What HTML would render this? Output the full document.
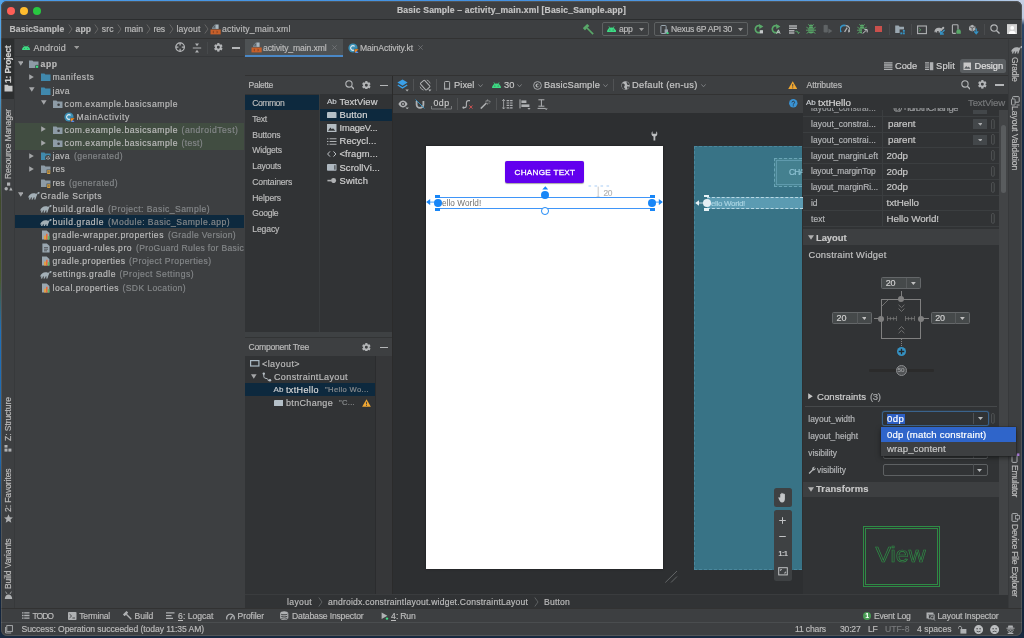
<!DOCTYPE html>
<html><head><meta charset="utf-8"><title>Basic Sample</title><style>
html,body{margin:0;padding:0}
body{width:1024px;height:638px;position:relative;overflow:hidden;background:#1b2f49;font-family:"Liberation Sans",sans-serif;font-size:8.6px;color:#bbbbbb}
.a{position:absolute;box-sizing:border-box}
.t{position:absolute;white-space:nowrap;line-height:12px;height:12px;-webkit-text-stroke:0.18px currentColor}
#w{position:absolute;left:0;top:0;width:1024px;height:638px;will-change:transform}
.b{font-weight:bold}
</style></head><body><div id="w">
<div class="a" style="left:0px;top:0px;width:1024px;height:3px;background:linear-gradient(90deg,#4a9be8 0,#4391e2 500px,#5a9fe4 850px,#8cb8e8 960px,#b4cbe8 1010px,#c9d3e6 1024px);"></div>
<div class="a" style="left:0px;top:0px;width:3px;height:638px;background:linear-gradient(#55a6ea 0,#4a9ad8 90px,#3b6f7a 140px,#3f4a2a 200px,#4a5a30 280px,#1f6fb8 330px,#1f68ac 460px,#16304e 520px,#13233a 638px);"></div>
<div class="a" style="left:1020px;top:0px;width:4px;height:638px;background:linear-gradient(#c4cfe4 0,#bccae0 18px,#2a4668 25px,#162a44 120px,#14243a 638px);"></div>
<div class="a" style="left:0px;top:633px;width:1024px;height:5px;background:#172940;"></div>
<div class="a" style="left:1.2px;top:1.2px;width:1021.0px;height:634.4px;background:#3d3f41;border-radius:6px;overflow:hidden;"></div>
<div class="a" style="left:1.2px;top:1.2px;width:1021.0px;height:17.8px;background:#3d3f41;border-radius:6px 6px 0 0;"></div>
<div class="a" style="left:1.2px;top:19px;width:1021.0px;height:1px;background:#2b2d2e;"></div>
<div class="a" style="left:6.5px;top:6.5px;width:8.0px;height:8.0px;background:#fe5f57;border-radius:50%;"></div>
<div class="a" style="left:19.6px;top:6.5px;width:8.0px;height:8.0px;background:#febc2e;border-radius:50%;"></div>
<div class="a" style="left:32.7px;top:6.5px;width:8.0px;height:8.0px;background:#28c840;border-radius:50%;"></div>
<span class="t b" style="left:397px;top:4.3px;color:#c4c4c4;letter-spacing:0.154px;">Basic Sample – activity_main.xml [Basic_Sample.app]</span>
<div class="a" style="left:1.2px;top:20px;width:1021.0px;height:18px;background:#3d3f41;"></div>
<div class="a" style="left:1.2px;top:38px;width:1021.0px;height:1px;background:#323232;"></div>
<span class="t b" style="left:9.5px;top:23.2px;letter-spacing:0.135px;">BasicSample</span>
<svg class="a" style="left:67.5px;top:24.2px;" width="5" height="10" viewBox="0 0 5 10"><path d="M0.8 0.5 L4 5 L0.8 9.5" fill="none" stroke="#6e6e6e" stroke-width="0.8"/></svg>
<span class="t b" style="left:75.6px;top:23.2px;letter-spacing:0.04px;">app</span>
<svg class="a" style="left:94px;top:24.2px;" width="5" height="10" viewBox="0 0 5 10"><path d="M0.8 0.5 L4 5 L0.8 9.5" fill="none" stroke="#6e6e6e" stroke-width="0.8"/></svg>
<span class="t" style="left:101.7px;top:23.2px;letter-spacing:0.144px;">src</span>
<svg class="a" style="left:116.8px;top:24.2px;" width="5" height="10" viewBox="0 0 5 10"><path d="M0.8 0.5 L4 5 L0.8 9.5" fill="none" stroke="#6e6e6e" stroke-width="0.8"/></svg>
<span class="t" style="left:124.5px;top:23.2px;letter-spacing:-0.035px;">main</span>
<svg class="a" style="left:146px;top:24.2px;" width="5" height="10" viewBox="0 0 5 10"><path d="M0.8 0.5 L4 5 L0.8 9.5" fill="none" stroke="#6e6e6e" stroke-width="0.8"/></svg>
<span class="t" style="left:153.5px;top:23.2px;letter-spacing:-0.151px;">res</span>
<svg class="a" style="left:168.5px;top:24.2px;" width="5" height="10" viewBox="0 0 5 10"><path d="M0.8 0.5 L4 5 L0.8 9.5" fill="none" stroke="#6e6e6e" stroke-width="0.8"/></svg>
<span class="t" style="left:176.5px;top:23.2px;letter-spacing:0.177px;">layout</span>
<svg class="a" style="left:203.5px;top:24.2px;" width="5" height="10" viewBox="0 0 5 10"><path d="M0.8 0.5 L4 5 L0.8 9.5" fill="none" stroke="#6e6e6e" stroke-width="0.8"/></svg>
<svg class="a" style="left:210.3px;top:24px;" width="11" height="11" viewBox="0 0 11 11"><path d="M2 4.9V3.5L4.9 0.6H5.8V4.9Z" fill="#77838c"/><rect x="5.6" y="0.5" width="3" height="4.4" fill="#aab6be"/><path d="M3.2 3.4 4.8 1.8V3.4Z" fill="#4a4e50"/><rect x="0.5" y="5.5" width="10.2" height="4.9" fill="#c8602a"/><path d="M3.9 6.5 2.3 7.95 3.9 9.4ZM6.6 6.5 8.2 7.95 6.6 9.4Z" fill="#8c4424"/></svg>
<span class="t" style="left:222px;top:23.2px;letter-spacing:0.18px;">activity_main.xml</span>
<svg class="a" style="left:583px;top:23.5px;" width="11" height="11" viewBox="0 0 11 11"><g transform="rotate(-45 5.5 5.5)"><rect x="2.4" y="0.6" width="6.2" height="3" rx="0.5" fill="#59a869"/><rect x="4.7" y="3.4" width="1.7" height="8.6" fill="#59a869"/></g></svg>
<div class="a" style="left:601.5px;top:22px;width:47.5px;height:13.5px;background:#3d3f41;border:1px solid #5e6162;border-radius:2px;"></div>
<svg class="a" style="left:607px;top:25.5px;" width="9" height="6" viewBox="0 0 9 6"><path d="M0 6 A4.5 4.6 0 0 1 9 6 Z" fill="#3ddc84"/><path d="M1.8 0.3 2.9 2 M7.2 0.3 6.1 2" stroke="#3ddc84" stroke-width="0.7"/><circle cx="2.9" cy="4" r="0.5" fill="#3d3f41"/><circle cx="6.1" cy="4" r="0.5" fill="#3d3f41"/></svg>
<div class="a" style="left:614.2px;top:30.2px;width:2.2px;height:2.2px;background:#3ddc84;border-radius:50%;"></div>
<span class="t" style="left:619px;top:23.2px;letter-spacing:-0.281px;">app</span>
<svg class="a" style="left:639.0px;top:27.7px;" width="5" height="3.2" viewBox="0 0 5 3.2"><path d="M0 0H5L2.5 3.2Z" fill="#9a9a9a"/></svg>
<div class="a" style="left:653.5px;top:22px;width:94.5px;height:13.5px;background:#3d3f41;border:1px solid #5e6162;border-radius:2px;"></div>
<svg class="a" style="left:660px;top:24.5px;" width="9" height="9.5" viewBox="0 0 9 9.5"><rect x="0.9" y="0.5" width="5.2" height="8" rx="0.8" fill="none" stroke="#9aa7b0" stroke-width="1"/><rect x="4.6" y="4.4" width="3.4" height="4" fill="#9aa7b0"/><circle cx="7.6" cy="8.2" r="1.1" fill="#3ddc84"/></svg>
<span class="t" style="left:671px;top:23.2px;letter-spacing:-0.255px;">Nexus 6P API 30</span>
<svg class="a" style="left:738.0px;top:27.7px;" width="5" height="3.2" viewBox="0 0 5 3.2"><path d="M0 0H5L2.5 3.2Z" fill="#9a9a9a"/></svg>
<svg class="a" style="left:754.3px;top:24.2px;" width="10" height="10.5" viewBox="0 0 10 10.5"><path d="M7.2 2.6 A3.5 3.5 0 1 0 8 6.6" fill="none" stroke="#59a869" stroke-width="1.7"/><path d="M5 0 L9.4 2.6 L5.4 5Z" fill="#59a869"/><rect x="5.8" y="6.2" width="3.2" height="3.2" fill="#c4c6c8"/></svg>
<svg class="a" style="left:771px;top:24.2px;" width="10" height="10.5" viewBox="0 0 10 10.5"><path d="M7.2 2.6 A3.5 3.5 0 1 0 8 6.6" fill="none" stroke="#59a869" stroke-width="1.7"/><path d="M5 0 L9.4 2.6 L5.4 5Z" fill="#59a869"/><path d="M5.6 9.8 L7.4 5.8 L9.2 9.8 M6.4 8.6 H8.4" stroke="#c4c6c8" stroke-width="0.9" fill="none"/></svg>
<svg class="a" style="left:789px;top:25px;" width="10.5" height="9.5" viewBox="0 0 10.5 9.5"><path d="M0 0.9h8M0 3.3h8M0 5.7h5.4M0 8.1h5.4" stroke="#afb1b3" stroke-width="1.5"/><path d="M6.4 6.4c2.2-0.6 3 0.4 3 1.8M8.2 7.4l1.2 1.2 1.1-1.4" fill="none" stroke="#59a869" stroke-width="0.9"/></svg>
<svg class="a" style="left:805.6px;top:24px;" width="10" height="10" viewBox="0 0 10 10"><ellipse cx="5" cy="6" rx="2.9" ry="3.5" fill="#59a869"/><path d="M3 2.6A2 2 0 0 1 7 2.6Z" fill="#59a869"/><path d="M2.4 0.2 3.8 2M7.6 0.2 6.2 2M0.4 3.2 2.6 4.6M9.6 3.2 7.4 4.6M0 6.2h2.2M10 6.2h-2.2M0.6 9.4 2.8 8M9.4 9.4 7.2 8" stroke="#59a869" stroke-width="0.9"/><path d="M2.4 5h5.2M2.4 7.2h5.2" stroke="#3d3f41" stroke-width="0.6"/></svg>
<svg class="a" style="left:822.6px;top:24.4px;" width="10" height="10" viewBox="0 0 10 10"><path d="M0.6 1.2 a4.4 4.4 0 0 1 4.2 0 v6.8 a4.4 4.4 0 0 1-4.2 0z" fill="#5f6365"/><path d="M5.4 4.4 L9.4 7 L5.4 9.6Z" fill="#5f6365"/></svg>
<svg class="a" style="left:839.6px;top:24.4px;" width="10" height="9" viewBox="0 0 10 9"><path d="M1.2 8 A4 4 0 0 1 5.6 1.6" fill="none" stroke="#3592c4" stroke-width="1.7"/><path d="M5.6 1.6 A4 4 0 0 1 9 8" fill="none" stroke="#afb1b3" stroke-width="1.2"/><path d="M4.6 8 L7.2 3.6" stroke="#afb1b3" stroke-width="1.3"/><path d="M8.6 5.4v3" stroke="#afb1b3" stroke-width="0.9"/></svg>
<svg class="a" style="left:857px;top:24px;" width="10" height="10" viewBox="0 0 10 10"><ellipse cx="5" cy="6" rx="2.9" ry="3.5" fill="#59a869"/><path d="M3 2.6A2 2 0 0 1 7 2.6Z" fill="#59a869"/><path d="M2.4 0.2 3.8 2M7.6 0.2 6.2 2M0.4 3.2 2.6 4.6M9.6 3.2 7.4 4.6M0 6.2h2.2M10 6.2h-2.2M0.6 9.4 2.8 8M9.4 9.4 7.2 8" stroke="#59a869" stroke-width="0.9"/><path d="M2.4 5h5.2M2.4 7.2h5.2" stroke="#3d3f41" stroke-width="0.6"/></svg>
<svg class="a" style="left:861.6px;top:29.4px;" width="6" height="5" viewBox="0 0 6 5"><rect width="6" height="5" fill="#3d3f41"/><path d="M0.6 4.6 L4.6 1M2.4 0.6 H5.2 V3.4" stroke="#c4c6c8" stroke-width="1" fill="none"/></svg>
<div class="a" style="left:875.3px;top:25.5px;width:6.8px;height:6.7px;background:#c9504c;"></div>
<div class="a" style="left:889.3px;top:23.5px;width:0.7px;height:11.0px;background:#4a4c4e;"></div>
<svg class="a" style="left:895.4px;top:24.8px;" width="10.5" height="10" viewBox="0 0 10.5 10"><path d="M0.2 0.6h3.4l1 1.2H9v6.2H0.2z" fill="#9aa7b0"/><path d="M4.6 4.4h5.6v5.6H4.6z" fill="#3d3f41"/><rect x="5.4" y="7.4" width="1.9" height="1.9" fill="#3592c4"/><rect x="7.9" y="7.4" width="1.9" height="1.9" fill="#3592c4"/><rect x="7.9" y="4.9" width="1.9" height="1.9" fill="#3592c4"/></svg>
<div class="a" style="left:911.2px;top:23.5px;width:0.7px;height:11.0px;background:#4a4c4e;"></div>
<svg class="a" style="left:916.5px;top:24.5px;" width="10" height="10" viewBox="0 0 10 10"><rect x="0.6" y="1" width="8.8" height="7.6" fill="none" stroke="#afb1b3" stroke-width="1.1"/><path d="M2.2 3.4 3.8 4.8 2.2 6.2" fill="none" stroke="#59a869" stroke-width="0.9"/></svg>
<svg class="a" style="left:933.6px;top:24.6px;" width="11.5" height="10" viewBox="0 0 11.5 10"><path d="M0.4 7.6C0.2 4.2 2.4 2.6 5 2.8 6.4 2.8 7.2 3.6 7.8 3.2 8.2 1.4 10 1.2 10.3 2.4 10.5 3.6 9.4 4.2 9 4.2L8 5.4 6.2 7.6H4.6V6H3.2V7.6H1.6V6.6Z" fill="#afb1b3"/><path d="M10.6 5 7 8.6M6.6 5.8V9H9.8" fill="none" stroke="#3592c4" stroke-width="1.3"/></svg>
<svg class="a" style="left:951px;top:24px;" width="11" height="11" viewBox="0 0 11 11"><rect x="1.4" y="0.8" width="5.6" height="8.6" rx="0.8" fill="none" stroke="#afb1b3" stroke-width="1.1"/><rect x="4.8" y="5.6" width="4.6" height="4.6" fill="#3d3f41"/><path d="M5.4 7.4 A2.2 2.2 0 0 1 9.8 7.4V9.8H5.4Z" fill="#59a869"/></svg>
<svg class="a" style="left:967.5px;top:24px;" width="11" height="11" viewBox="0 0 11 11"><path d="M4.2 0.8 7.4 2.4V6L4.2 7.6 1 6V2.4Z" fill="#afb1b3"/><path d="M1.4 2.6 4.2 4 7 2.6M4.2 4V7.4" stroke="#3d3f41" stroke-width="0.7" fill="none"/><path d="M8.2 4.6V9M6.2 7.4 8.2 9.8 10.2 7.4" stroke="#3592c4" stroke-width="1.3" fill="none"/></svg>
<div class="a" style="left:984.3px;top:23.5px;width:0.7px;height:11.0px;background:#4a4c4e;"></div>
<svg class="a" style="left:990.0400000000001px;top:24.04px;" width="10.120000000000001" height="10.120000000000001" viewBox="0 0 11 11"><circle cx="4.4" cy="4.4" r="3.5" fill="none" stroke="#b4b6b8" stroke-width="1.2"/><path d="M7 7 10.4 10.4" stroke="#b4b6b8" stroke-width="1.5"/></svg>
<svg class="a" style="left:1006.9px;top:23.5px;" width="10.4" height="10.6" viewBox="0 0 11 11"><rect width="11" height="11" fill="#d4d4d4"/><circle cx="5.5" cy="4" r="2" fill="#fff"/><path d="M1.8 11 A3.7 4 0 0 1 9.2 11Z" fill="#fff"/></svg>
<div class="a" style="left:1.2px;top:39px;width:13.3px;height:569.5px;background:#3d3f41;"></div>
<div class="a" style="left:14.2px;top:39px;width:1.0px;height:569.5px;background:#37393b;"></div>
<div class="a" style="left:1.2px;top:39px;width:13.3px;height:59.5px;background:#2d2f30;"></div>
<span class="t b" style="left:8.2px;top:76.5px;color:#d0d0d0;letter-spacing:-0.167px;transform-origin:0 6px;transform:rotate(-90deg);">1: Project</span>
<svg class="a" style="left:3.5px;top:84px;" width="9" height="8" viewBox="0 0 9 8"><path d="M0.5 0.8h3.2l0.9 1H8.5v5.6H0.5z" fill="#c8c8c8"/></svg>
<span class="t" style="left:8.2px;top:172.5px;letter-spacing:-0.193px;transform-origin:0 6px;transform:rotate(-90deg);">Resource Manager</span>
<svg class="a" style="left:3.5px;top:181.5px;" width="9" height="9" viewBox="0 0 9 9"><rect x="3" y="0.5" width="3.2" height="3.2" fill="#afb1b3"/><circle cx="2.2" cy="6.8" r="1.7" fill="#afb1b3"/><path d="M5.2 8.4 6.9 5.2 8.6 8.4Z" fill="#afb1b3"/></svg>
<span class="t" style="left:8.2px;top:435px;letter-spacing:-0.074px;transform-origin:0 6px;transform:rotate(-90deg);">Z: Structure</span>
<svg class="a" style="left:4px;top:444.5px;" width="8" height="8" viewBox="0 0 8 8"><rect x="0.5" y="3.6" width="3" height="3" fill="#afb1b3"/><rect x="4.4" y="3.6" width="3" height="3" fill="#afb1b3"/><rect x="0.5" y="0" width="3" height="2.6" fill="#afb1b3"/></svg>
<span class="t" style="left:8.2px;top:505.5px;letter-spacing:-0.117px;transform-origin:0 6px;transform:rotate(-90deg);">2: Favorites</span>
<svg class="a" style="left:3.5px;top:513.5px;" width="9" height="9" viewBox="0 0 9 9"><path d="M4.5 0.3 5.8 3.2 8.9 3.5 6.5 5.6 7.3 8.7 4.5 7 1.7 8.7 2.5 5.6 0.1 3.5 3.2 3.2Z" fill="#afb1b3"/></svg>
<span class="t" style="left:8.2px;top:582.5px;letter-spacing:-0.135px;transform-origin:0 6px;transform:rotate(-90deg);">Build Variants</span>
<svg class="a" style="left:3.5px;top:591px;" width="9" height="8" viewBox="0 0 9 8"><path d="M0.8 8 A3.7 4.6 0 0 1 8.2 8Z" fill="#afb1b3"/><path d="M1.6 0.6 3 3M7.4 0.6 6 3" stroke="#afb1b3" stroke-width="0.8"/></svg>
<div class="a" style="left:15.3px;top:39px;width:229.2px;height:569.5px;background:#3d3f41;"></div>
<div class="a" style="left:244.5px;top:39px;width:0.8px;height:569.5px;background:#323232;"></div>
<div class="a" style="left:15.3px;top:56.3px;width:229.2px;height:0.7px;background:#353739;"></div>
<svg class="a" style="left:22px;top:44.6px;" width="8" height="5.4" viewBox="0 0 9 6"><path d="M0 6 A4.5 4.6 0 0 1 9 6 Z" fill="#3ddc84"/><path d="M1.8 0.3 2.9 2 M7.2 0.3 6.1 2" stroke="#3ddc84" stroke-width="0.7"/><circle cx="2.9" cy="4" r="0.5" fill="#3d3f41"/><circle cx="6.1" cy="4" r="0.5" fill="#3d3f41"/></svg>
<span class="t" style="left:33.6px;top:41.5px;font-size:9px;letter-spacing:0.196px;">Android</span>
<svg class="a" style="left:73.8px;top:46.4px;" width="5.4" height="3.2" viewBox="0 0 5.4 3.2"><path d="M0 0H5.4L2.7 3.2Z" fill="#9a9a9a"/></svg>
<svg class="a" style="left:175px;top:42.4px;" width="10.2" height="10.2" viewBox="0 0 10.2 10.2"><circle cx="5.1" cy="5.1" r="4.3" fill="none" stroke="#b4b6b8" stroke-width="1.2"/><path d="M5.1 0.8V3.4M5.1 6.8V9.4M0.8 5.1H3.4M6.8 5.1H9.4" stroke="#b4b6b8" stroke-width="1.2"/></svg>
<svg class="a" style="left:191.9px;top:42.6px;" width="10" height="10" viewBox="0 0 10 10"><path d="M0.8 5h8.4" stroke="#afb1b3" stroke-width="1"/><path d="M3 0.6 5 3.2 7 0.6ZM3 9.4 5 6.8 7 9.4Z" fill="#afb1b3"/></svg>
<div class="a" style="left:207.4px;top:42px;width:0.7px;height:12px;background:#46494b;"></div>
<svg class="a" style="left:214.15px;top:43.35px;" width="8.7" height="8.7" viewBox="0 0 10 10"><circle cx="5" cy="5" r="2.75" fill="none" stroke="#b4b6b8" stroke-width="2.1"/><path d="M5.00 8.00L5.00 9.95" stroke="#b4b6b8" stroke-width="2.5"/><path d="M2.40 6.50L0.71 7.48" stroke="#b4b6b8" stroke-width="2.5"/><path d="M2.40 3.50L0.71 2.53" stroke="#b4b6b8" stroke-width="2.5"/><path d="M5.00 2.00L5.00 0.05" stroke="#b4b6b8" stroke-width="2.5"/><path d="M7.60 3.50L9.29 2.52" stroke="#b4b6b8" stroke-width="2.5"/><path d="M7.60 6.50L9.29 7.47" stroke="#b4b6b8" stroke-width="2.5"/></svg>
<div class="a" style="left:232.0px;top:47.300000000000004px;width:8.0px;height:1.3px;background:#b4b6b8;"></div>
<div class="a" style="left:15.3px;top:123.4px;width:229.2px;height:26.33px;background:#414d41;"></div>
<div class="a" style="left:15.3px;top:215.31px;width:229.2px;height:13.2px;background:#0d293e;"></div>
<svg class="a" style="left:17.5px;top:60.849999999999994px;" width="5.6" height="5" viewBox="0 0 5.6 5"><path d="M0 0.2H5.6L2.8 4.8Z" fill="#a4a6a8"/></svg>
<svg class="a" style="left:28.8px;top:60.349999999999994px;" width="10.5" height="9" viewBox="0 0 10.5 9"><path d="M0 0.4h3.4l1 1.2H9.5V8H0z" fill="#8d9ba6"/><circle cx="8" cy="6.8" r="2" fill="#3d3f41"/><circle cx="8" cy="6.8" r="1.3" fill="#3ddc84"/></svg>
<span class="t b" style="left:40.6px;top:58.35px;letter-spacing:0.54px;">app</span>
<svg class="a" style="left:28.6px;top:73.88000000000001px;" width="5" height="6" viewBox="0 0 5 6"><path d="M0.2 0.2 4.8 3 0.2 5.8Z" fill="#a4a6a8"/></svg>
<svg class="a" style="left:41px;top:73.48px;" width="9.5" height="8" viewBox="0 0 9.5 8"><path d="M0 0.4h3.4l1 1.2H9.5V8H0z" fill="#4089ad"/></svg>
<span class="t" style="left:52.6px;top:71.48px;letter-spacing:0.569px;">manifests</span>
<svg class="a" style="left:29.2px;top:87.11px;" width="5.6" height="5" viewBox="0 0 5.6 5"><path d="M0 0.2H5.6L2.8 4.8Z" fill="#a4a6a8"/></svg>
<svg class="a" style="left:41px;top:86.61px;" width="9.5" height="8" viewBox="0 0 9.5 8"><path d="M0 0.4h3.4l1 1.2H9.5V8H0z" fill="#4089ad"/></svg>
<span class="t" style="left:52.6px;top:84.61px;letter-spacing:0.409px;">java</span>
<svg class="a" style="left:41.2px;top:100.24px;" width="5.6" height="5" viewBox="0 0 5.6 5"><path d="M0 0.2H5.6L2.8 4.8Z" fill="#a4a6a8"/></svg>
<svg class="a" style="left:53px;top:99.74px;" width="9.5" height="8" viewBox="0 0 9.5 8"><path d="M0 0.4h3.4l1 1.2H9.5V8H0z" fill="#8d9ba6"/><circle cx="5.6" cy="4.8" r="1.3" fill="#3d3f41"/></svg>
<span class="t" style="left:64.6px;top:97.74px;letter-spacing:0.528px;">com.example.basicsample</span>
<svg class="a" style="left:64px;top:111.87px;" width="11" height="10.5" viewBox="0 0 11 10.5"><circle cx="5" cy="5" r="4.6" fill="#3b8fb5"/><path d="M6.6 3.4A2.3 2.3 0 1 0 6.6 6.6" fill="none" stroke="#dfeaf0" stroke-width="1.2"/><path d="M6.4 5.8h4.4v4.6H6.4z" fill="#3d3f41"/><path d="M6.8 6.2h3.8L6.8 10z" fill="#f88a1c"/><path d="M8.7 8.1 10.6 10H6.8z" fill="#5a8fe8"/></svg>
<span class="t" style="left:76.4px;top:110.87px;letter-spacing:0.646px;">MainActivity</span>
<svg class="a" style="left:40.6px;top:126.4px;" width="5" height="6" viewBox="0 0 5 6"><path d="M0.2 0.2 4.8 3 0.2 5.8Z" fill="#a4a6a8"/></svg>
<svg class="a" style="left:53px;top:126.0px;" width="9.5" height="8" viewBox="0 0 9.5 8"><path d="M0 0.4h3.4l1 1.2H9.5V8H0z" fill="#8d9ba6"/><circle cx="5.6" cy="4.8" r="1.3" fill="#3d3f41"/></svg>
<span class="t" style="left:64.6px;top:124.0px;letter-spacing:0.528px;">com.example.basicsample</span>
<span class="t" style="left:181.5px;top:124.0px;color:#848789;letter-spacing:0.526px;">(androidTest)</span>
<svg class="a" style="left:40.6px;top:139.53px;" width="5" height="6" viewBox="0 0 5 6"><path d="M0.2 0.2 4.8 3 0.2 5.8Z" fill="#a4a6a8"/></svg>
<svg class="a" style="left:53px;top:139.13px;" width="9.5" height="8" viewBox="0 0 9.5 8"><path d="M0 0.4h3.4l1 1.2H9.5V8H0z" fill="#8d9ba6"/><circle cx="5.6" cy="4.8" r="1.3" fill="#3d3f41"/></svg>
<span class="t" style="left:64.6px;top:137.13px;letter-spacing:0.528px;">com.example.basicsample</span>
<span class="t" style="left:181.5px;top:137.13px;color:#848789;letter-spacing:0.32px;">(test)</span>
<svg class="a" style="left:28.6px;top:152.66px;" width="5" height="6" viewBox="0 0 5 6"><path d="M0.2 0.2 4.8 3 0.2 5.8Z" fill="#a4a6a8"/></svg>
<svg class="a" style="left:41px;top:152.26px;" width="9.5" height="8" viewBox="0 0 9.5 8"><path d="M0 0.4h3.4l1 1.2H9.5V8H0z" fill="#4089ad"/></svg>
<svg class="a" style="left:44.5px;top:155.26px;" width="6" height="6" viewBox="0 0 6 6"><circle cx="3" cy="3" r="2.9" fill="#3d3f41"/><circle cx="3" cy="3" r="1.3" fill="none" stroke="#afb1b3" stroke-width="1.3" stroke-dasharray="0.8 0.6"/></svg>
<span class="t" style="left:52.6px;top:150.26px;letter-spacing:0.409px;">java</span>
<span class="t" style="left:74px;top:150.26px;color:#848789;letter-spacing:0.415px;">(generated)</span>
<svg class="a" style="left:28.6px;top:165.79px;" width="5" height="6" viewBox="0 0 5 6"><path d="M0.2 0.2 4.8 3 0.2 5.8Z" fill="#a4a6a8"/></svg>
<svg class="a" style="left:41px;top:165.39px;" width="10" height="9.5" viewBox="0 0 10 9.5"><path d="M0 0.4h3.4l1 1.2H9.5V8H0z" fill="#8d9ba6"/><rect x="5.6" y="4.6" width="4" height="4.6" fill="#3d3f41"/><rect x="6.2" y="5.2" width="3" height="3.8" fill="#d9a343"/><path d="M6.8 6.4h1.8M6.8 7.6h1.8" stroke="#3d3f41" stroke-width="0.5"/></svg>
<span class="t" style="left:52.6px;top:163.39px;letter-spacing:0.149px;">res</span>
<svg class="a" style="left:41px;top:178.52px;" width="10" height="9.5" viewBox="0 0 10 9.5"><path d="M0 0.4h3.4l1 1.2H9.5V8H0z" fill="#8d9ba6"/><rect x="5.6" y="4.6" width="4" height="4.6" fill="#3d3f41"/><rect x="6.2" y="5.2" width="3" height="3.8" fill="#d9a343"/><path d="M6.8 6.4h1.8M6.8 7.6h1.8" stroke="#3d3f41" stroke-width="0.5"/></svg>
<span class="t" style="left:52.6px;top:176.52px;letter-spacing:0.149px;">res</span>
<span class="t" style="left:69px;top:176.52px;color:#848789;letter-spacing:0.415px;">(generated)</span>
<svg class="a" style="left:17.5px;top:192.15px;" width="5.6" height="5" viewBox="0 0 5.6 5"><path d="M0 0.2H5.6L2.8 4.8Z" fill="#a4a6a8"/></svg>
<svg class="a" style="left:28px;top:191.25px;" width="11.5" height="8.6" viewBox="0 0 11.5 8.6"><g transform="translate(1.6 0) skewX(-18)"><path d="M0.6 6.6C0.4 3.6 2.4 2 5 2.2 6.6 2.2 7.4 3 8 2.6 8.2 0.8 10.2 0.4 10.6 1.6 10.9 2.8 9.9 3.3 9.3 3.1 9.6 2.2 9 1.8 8.8 2.6 9 3.8 8.6 4.8 8.6 5.6V8.4H7.2V6.4H6V8.4H4.6V6.4H3.4V8.4H2V6.6Z" fill="#a3afb6"/></g></svg>
<span class="t" style="left:40.6px;top:189.65px;letter-spacing:0.496px;">Gradle Scripts</span>
<svg class="a" style="left:40px;top:204.38px;" width="11.5" height="8.6" viewBox="0 0 11.5 8.6"><g transform="translate(1.6 0) skewX(-18)"><path d="M0.6 6.6C0.4 3.6 2.4 2 5 2.2 6.6 2.2 7.4 3 8 2.6 8.2 0.8 10.2 0.4 10.6 1.6 10.9 2.8 9.9 3.3 9.3 3.1 9.6 2.2 9 1.8 8.8 2.6 9 3.8 8.6 4.8 8.6 5.6V8.4H7.2V6.4H6V8.4H4.6V6.4H3.4V8.4H2V6.6Z" fill="#a3afb6"/></g></svg>
<span class="t" style="left:52.6px;top:202.78px;letter-spacing:0.58px;">build.gradle</span>
<span class="t" style="left:108px;top:202.78px;color:#848789;letter-spacing:0.427px;">(Project: Basic_Sample)</span>
<svg class="a" style="left:40px;top:217.51px;" width="11.5" height="8.6" viewBox="0 0 11.5 8.6"><g transform="translate(1.6 0) skewX(-18)"><path d="M0.6 6.6C0.4 3.6 2.4 2 5 2.2 6.6 2.2 7.4 3 8 2.6 8.2 0.8 10.2 0.4 10.6 1.6 10.9 2.8 9.9 3.3 9.3 3.1 9.6 2.2 9 1.8 8.8 2.6 9 3.8 8.6 4.8 8.6 5.6V8.4H7.2V6.4H6V8.4H4.6V6.4H3.4V8.4H2V6.6Z" fill="#a3afb6"/></g></svg>
<span class="t" style="left:52.6px;top:215.91px;letter-spacing:0.58px;">build.gradle</span>
<span class="t" style="left:108px;top:215.91px;color:#848789;letter-spacing:0.448px;">(Module: Basic_Sample.app)</span>
<svg class="a" style="left:41px;top:230.04px;" width="10" height="10" viewBox="0 0 10 10"><path d="M1 0.5h4.6L8.4 3V9.5H1z" fill="#9aa7b0"/><rect x="3.2" y="5.6" width="1.6" height="4" fill="#f0a030"/><rect x="5" y="3.8" width="1.6" height="5.8" fill="#e86a3a"/><rect x="6.8" y="6.2" width="1.6" height="3.4" fill="#5fb865"/></svg>
<span class="t" style="left:52.6px;top:229.04px;letter-spacing:0.539px;">gradle-wrapper.properties</span>
<span class="t" style="left:168px;top:229.04px;color:#848789;letter-spacing:0.339px;">(Gradle Version)</span>
<svg class="a" style="left:41px;top:243.17px;" width="10" height="10" viewBox="0 0 10 10"><path d="M1.4 0.5h4.4L8.6 3V9.5H1.4z" fill="#9aa7b0"/><path d="M3 4.6h4M3 6.2h4M3 7.8h3" stroke="#3d3f41" stroke-width="0.7"/></svg>
<span class="t" style="left:52.6px;top:242.17px;letter-spacing:0.483px;">proguard-rules.pro</span>
<span class="t" style="left:136px;top:242.17px;color:#848789;letter-spacing:0.308px;">(ProGuard Rules for Basic</span>
<svg class="a" style="left:41px;top:256.3px;" width="10" height="10" viewBox="0 0 10 10"><path d="M1 0.5h4.6L8.4 3V9.5H1z" fill="#9aa7b0"/><rect x="3.2" y="5.6" width="1.6" height="4" fill="#f0a030"/><rect x="5" y="3.8" width="1.6" height="5.8" fill="#e86a3a"/><rect x="6.8" y="6.2" width="1.6" height="3.4" fill="#5fb865"/></svg>
<span class="t" style="left:52.6px;top:255.3px;letter-spacing:0.494px;">gradle.properties</span>
<span class="t" style="left:129px;top:255.3px;color:#848789;letter-spacing:0.423px;">(Project Properties)</span>
<svg class="a" style="left:40px;top:270.03000000000003px;" width="11.5" height="8.6" viewBox="0 0 11.5 8.6"><g transform="translate(1.6 0) skewX(-18)"><path d="M0.6 6.6C0.4 3.6 2.4 2 5 2.2 6.6 2.2 7.4 3 8 2.6 8.2 0.8 10.2 0.4 10.6 1.6 10.9 2.8 9.9 3.3 9.3 3.1 9.6 2.2 9 1.8 8.8 2.6 9 3.8 8.6 4.8 8.6 5.6V8.4H7.2V6.4H6V8.4H4.6V6.4H3.4V8.4H2V6.6Z" fill="#a3afb6"/></g></svg>
<span class="t" style="left:52.6px;top:268.43px;letter-spacing:0.5px;">settings.gradle</span>
<span class="t" style="left:119.5px;top:268.43px;color:#848789;letter-spacing:0.477px;">(Project Settings)</span>
<svg class="a" style="left:41px;top:282.56px;" width="10" height="10" viewBox="0 0 10 10"><path d="M1 0.5h4.6L8.4 3V9.5H1z" fill="#9aa7b0"/><rect x="3.2" y="5.6" width="1.6" height="4" fill="#f0a030"/><rect x="5" y="3.8" width="1.6" height="5.8" fill="#e86a3a"/><rect x="6.8" y="6.2" width="1.6" height="3.4" fill="#5fb865"/></svg>
<span class="t" style="left:52.6px;top:281.56px;letter-spacing:0.507px;">local.properties</span>
<span class="t" style="left:122.5px;top:281.56px;color:#848789;letter-spacing:0.373px;">(SDK Location)</span>
<div class="a" style="left:245.3px;top:39px;width:763.2px;height:17.5px;background:#3d3f41;"></div>
<div class="a" style="left:245.3px;top:39px;width:97.4px;height:17.5px;background:#4e5254;"></div>
<div class="a" style="left:245.3px;top:54.5px;width:97.4px;height:2.0px;background:#4a88c7;"></div>
<div class="a" style="left:245.3px;top:56.7px;width:763.2px;height:0.7px;background:#323232;"></div>
<svg class="a" style="left:250.5px;top:42.4px;" width="11" height="11" viewBox="0 0 11 11"><path d="M2 4.9V3.5L4.9 0.6H5.8V4.9Z" fill="#77838c"/><rect x="5.6" y="0.5" width="3" height="4.4" fill="#aab6be"/><path d="M3.2 3.4 4.8 1.8V3.4Z" fill="#4a4e50"/><rect x="0.5" y="5.5" width="10.2" height="4.9" fill="#c8602a"/><path d="M3.9 6.5 2.3 7.95 3.9 9.4ZM6.6 6.5 8.2 7.95 6.6 9.4Z" fill="#8c4424"/></svg>
<span class="t" style="left:263px;top:41.5px;letter-spacing:-0.114px;">activity_main.xml</span>
<svg class="a" style="left:331.5px;top:45.2px;" width="5" height="5" viewBox="0 0 5 5"><path d="M0.3 0.3 4.7 4.7M4.7 0.3 0.3 4.7" stroke="#7a7d7f" stroke-width="0.7"/></svg>
<svg class="a" style="left:348px;top:42.7px;" width="11" height="10.5" viewBox="0 0 11 10.5"><circle cx="5" cy="5" r="4.6" fill="#3b8fb5"/><path d="M6.6 3.4A2.3 2.3 0 1 0 6.6 6.6" fill="none" stroke="#dfeaf0" stroke-width="1.2"/><path d="M6.4 5.8h4.4v4.6H6.4z" fill="#3d3f41"/><path d="M6.8 6.2h3.8L6.8 10z" fill="#f88a1c"/><path d="M8.7 8.1 10.6 10H6.8z" fill="#5a8fe8"/></svg>
<span class="t" style="left:360px;top:41.5px;letter-spacing:-0.085px;">MainActivity.kt</span>
<svg class="a" style="left:417.5px;top:45.2px;" width="5" height="5" viewBox="0 0 5 5"><path d="M0.3 0.3 4.7 4.7M4.7 0.3 0.3 4.7" stroke="#7a7d7f" stroke-width="0.7"/></svg>
<div class="a" style="left:245.3px;top:57.4px;width:763.2px;height:17.9px;background:#3d3f41;"></div>
<div class="a" style="left:245.3px;top:75.3px;width:763.2px;height:0.7px;background:#323232;"></div>
<div class="a" style="left:960px;top:58.5px;width:45.7px;height:14.3px;background:#5a5e61;border-radius:2.5px;"></div>
<svg class="a" style="left:884px;top:61.5px;" width="8.5" height="9" viewBox="0 0 8.5 9"><path d="M0 0.8h8.5M0 3h8.5M0 5.2h8.5M0 7.4h8.5" stroke="#afb1b3" stroke-width="1.3"/></svg>
<span class="t" style="left:895px;top:60.2px;color:#d0d0d0;font-size:9.3px;letter-spacing:-0.059px;">Code</span>
<svg class="a" style="left:925px;top:61.5px;" width="8.5" height="9" viewBox="0 0 8.5 9"><path d="M0 0.8h4M0 3h4M0 5.2h4M0 7.4h4" stroke="#afb1b3" stroke-width="1.2"/><rect x="4.8" y="0.2" width="3.5" height="8" fill="#afb1b3"/></svg>
<span class="t" style="left:936px;top:60.2px;color:#d0d0d0;font-size:9.3px;letter-spacing:0.181px;">Split</span>
<svg class="a" style="left:963px;top:61.8px;" width="8.5" height="8.5" viewBox="0 0 8.5 8.5"><rect x="0.5" y="0.5" width="7.5" height="7.5" fill="#c8c8c8"/><path d="M1.2 6.8 3.2 4 4.6 5.6 5.8 4.4 7.4 6.8Z" fill="#5a5e61"/></svg>
<span class="t" style="left:974.5px;top:60.2px;color:#e0e0e0;font-size:9.3px;letter-spacing:-0.076px;">Design</span>
<div class="a" style="left:245.3px;top:76px;width:147.0px;height:18.3px;background:#3d3f41;"></div>
<span class="t" style="left:248.6px;top:79px;letter-spacing:-0.338px;">Palette</span>
<svg class="a" style="left:344.55px;top:80.45px;" width="9.9" height="9.9" viewBox="0 0 11 11"><circle cx="4.4" cy="4.4" r="3.5" fill="none" stroke="#b4b6b8" stroke-width="1.2"/><path d="M7 7 10.4 10.4" stroke="#b4b6b8" stroke-width="1.5"/></svg>
<svg class="a" style="left:362.15px;top:80.65px;" width="8.7" height="8.7" viewBox="0 0 10 10"><circle cx="5" cy="5" r="2.75" fill="none" stroke="#b4b6b8" stroke-width="2.1"/><path d="M5.00 8.00L5.00 9.95" stroke="#b4b6b8" stroke-width="2.5"/><path d="M2.40 6.50L0.71 7.48" stroke="#b4b6b8" stroke-width="2.5"/><path d="M2.40 3.50L0.71 2.53" stroke="#b4b6b8" stroke-width="2.5"/><path d="M5.00 2.00L5.00 0.05" stroke="#b4b6b8" stroke-width="2.5"/><path d="M7.60 3.50L9.29 2.52" stroke="#b4b6b8" stroke-width="2.5"/><path d="M7.60 6.50L9.29 7.47" stroke="#b4b6b8" stroke-width="2.5"/></svg>
<div class="a" style="left:379.75px;top:84.6px;width:8.5px;height:1.3px;background:#b4b6b8;"></div>
<div class="a" style="left:245.3px;top:94.3px;width:74.2px;height:237.9px;background:#313335;"></div>
<div class="a" style="left:319.5px;top:94.3px;width:72.8px;height:237.9px;background:#313335;"></div>
<div class="a" style="left:319.2px;top:94.3px;width:0.7px;height:237.9px;background:#393c3e;"></div>
<div class="a" style="left:392.3px;top:76px;width:0.7px;height:518.5px;background:#2b2b2b;"></div>
<div class="a" style="left:245.3px;top:94.5px;width:73.9px;height:15.7px;background:#0d293e;"></div>
<span class="t" style="left:252.3px;top:97.0px;letter-spacing:-0.496px;">Common</span>
<span class="t" style="left:252.3px;top:112.78px;letter-spacing:-0.266px;">Text</span>
<span class="t" style="left:252.3px;top:128.56px;letter-spacing:-0.137px;">Buttons</span>
<span class="t" style="left:252.3px;top:144.34px;letter-spacing:-0.221px;">Widgets</span>
<span class="t" style="left:252.3px;top:160.12px;letter-spacing:-0.201px;">Layouts</span>
<span class="t" style="left:252.3px;top:175.9px;letter-spacing:-0.166px;">Containers</span>
<span class="t" style="left:252.3px;top:191.68px;letter-spacing:-0.132px;">Helpers</span>
<span class="t" style="left:252.3px;top:207.46px;letter-spacing:-0.286px;">Google</span>
<span class="t" style="left:252.3px;top:223.24px;letter-spacing:-0.12px;">Legacy</span>
<div class="a" style="left:320px;top:108.8px;width:72.3px;height:12.7px;background:#0d293e;"></div>
<span class="t" style="left:327px;top:96.0px;color:#c8ccd0;font-size:8px;letter-spacing:-0.148px;">Ab</span>
<span class="t" style="left:339.5px;top:96.0px;color:#d0d0d0;font-size:9.4px;letter-spacing:0.082px;">TextView</span>
<svg class="a" style="left:327px;top:111.89999999999999px;" width="9.5" height="6.4" viewBox="0 0 9.5 6.4"><rect width="9.5" height="6.4" rx="1" fill="#b4c0c8"/></svg>
<span class="t" style="left:339.5px;top:109.1px;color:#d8d8d8;font-size:9.4px;letter-spacing:0.148px;">Button</span>
<svg class="a" style="left:327px;top:124.19999999999999px;" width="9.5" height="8" viewBox="0 0 9.5 8"><rect x="0" y="0" width="9.5" height="8" fill="#b4bcc2"/><path d="M1 6.8 3.4 3.6 4.8 5.2 6 4.2 8.4 6.8Z" fill="#313335"/></svg>
<span class="t" style="left:339.5px;top:122.2px;color:#d0d0d0;font-size:9.4px;letter-spacing:-0.141px;">ImageV...</span>
<svg class="a" style="left:327px;top:137.8px;" width="9.5" height="7" viewBox="0 0 9.5 7"><path d="M0 0.8h1.4M2.6 0.8h6.9M0 3.5h1.4M2.6 3.5h6.9M0 6.2h1.4M2.6 6.2h6.9" stroke="#afb1b3" stroke-width="1.1"/></svg>
<span class="t" style="left:339.5px;top:135.3px;color:#d0d0d0;font-size:9.4px;letter-spacing:0.116px;">Recycl...</span>
<svg class="a" style="left:327px;top:151.4px;" width="9.5" height="6" viewBox="0 0 9.5 6"><path d="M3 0.4 0.6 3 3 5.6M6.5 0.4 8.9 3 6.5 5.6" stroke="#c0c4c8" stroke-width="1" fill="none"/></svg>
<span class="t" style="left:339.5px;top:148.4px;color:#d0d0d0;font-size:9.4px;letter-spacing:0.137px;">&lt;fragm...</span>
<svg class="a" style="left:327px;top:164.1px;" width="9.5" height="6.8" viewBox="0 0 9.5 6.8"><rect x="0" y="0" width="9.5" height="6.8" rx="0.8" fill="#aeb8c0"/><rect x="7.4" y="1.2" width="1" height="4.4" fill="#313335"/></svg>
<span class="t" style="left:339.5px;top:161.5px;color:#d0d0d0;font-size:9.4px;letter-spacing:0.097px;">ScrollVi...</span>
<svg class="a" style="left:327px;top:178.0px;" width="9.5" height="5.2" viewBox="0 0 9.5 5.2"><path d="M0.4 2.6h4" stroke="#afb1b3" stroke-width="1.6"/><circle cx="6.6" cy="2.6" r="2.5" fill="#afb1b3"/></svg>
<span class="t" style="left:339.5px;top:174.6px;color:#d0d0d0;font-size:9.4px;letter-spacing:0.146px;">Switch</span>
<div class="a" style="left:245.3px;top:332.2px;width:147.0px;height:5.1px;background:#3e4143;"></div>
<div class="a" style="left:245.3px;top:336.8px;width:147.0px;height:0.7px;background:#323435;"></div>
<div class="a" style="left:245.3px;top:337.5px;width:147.0px;height:18.8px;background:#3d3f41;"></div>
<span class="t" style="left:248.6px;top:341.2px;letter-spacing:-0.258px;">Component Tree</span>
<svg class="a" style="left:362.15px;top:342.65px;" width="8.7" height="8.7" viewBox="0 0 10 10"><circle cx="5" cy="5" r="2.75" fill="none" stroke="#b4b6b8" stroke-width="2.1"/><path d="M5.00 8.00L5.00 9.95" stroke="#b4b6b8" stroke-width="2.5"/><path d="M2.40 6.50L0.71 7.48" stroke="#b4b6b8" stroke-width="2.5"/><path d="M2.40 3.50L0.71 2.53" stroke="#b4b6b8" stroke-width="2.5"/><path d="M5.00 2.00L5.00 0.05" stroke="#b4b6b8" stroke-width="2.5"/><path d="M7.60 3.50L9.29 2.52" stroke="#b4b6b8" stroke-width="2.5"/><path d="M7.60 6.50L9.29 7.47" stroke="#b4b6b8" stroke-width="2.5"/></svg>
<div class="a" style="left:379.75px;top:346.6px;width:8.5px;height:1.3px;background:#b4b6b8;"></div>
<div class="a" style="left:245.3px;top:356.3px;width:147.0px;height:238.2px;background:#313335;"></div>
<div class="a" style="left:376px;top:356.3px;width:16.3px;height:238.2px;background:#363739;"></div>
<div class="a" style="left:375.2px;top:356.3px;width:0.8px;height:238.2px;background:#2b2c2e;"></div>
<div class="a" style="left:245.3px;top:383.2px;width:129.9px;height:13.1px;background:#0d293e;"></div>
<svg class="a" style="left:250px;top:360.4px;" width="9.5" height="7" viewBox="0 0 9.5 7"><rect x="0.6" y="0.6" width="8.3" height="5.4" fill="none" stroke="#a9b9c4" stroke-width="1.2"/></svg>
<span class="t" style="left:262px;top:357.8px;font-size:9px;letter-spacing:0.434px;">&lt;layout&gt;</span>
<svg class="a" style="left:251.2px;top:373.9px;" width="5.6" height="5" viewBox="0 0 5.6 5"><path d="M0 0.2H5.6L2.8 4.8Z" fill="#a4a6a8"/></svg>
<svg class="a" style="left:261.5px;top:371.8px;" width="10" height="10" viewBox="0 0 10 10"><path d="M1.8 1.6v2.6c0 1.6 0.8 2 2.2 2.2s2.2 0.6 2.2 2.2h1.6" fill="none" stroke="#b8c0c6" stroke-width="1"/><circle cx="1.8" cy="1.6" r="1.2" fill="#b8c0c6"/><circle cx="8" cy="8.3" r="1.2" fill="#b8c0c6"/></svg>
<span class="t" style="left:274px;top:370.8px;font-size:9px;letter-spacing:0.372px;">ConstraintLayout</span>
<span class="t" style="left:273.5px;top:383.8px;color:#c8ccd0;font-size:8px;letter-spacing:0.102px;">Ab</span>
<span class="t" style="left:286px;top:383.8px;color:#d8d8d8;font-size:9px;letter-spacing:0.373px;">txtHello</span>
<span class="t" style="left:325px;top:383.8px;color:#8a8d8f;font-size:7.6px;letter-spacing:0.358px;">&quot;Hello Wo...</span>
<svg class="a" style="left:273.5px;top:399.7px;" width="9.5" height="6.4" viewBox="0 0 9.5 6.4"><rect width="9.5" height="6.4" rx="1" fill="#b4c0c8"/></svg>
<span class="t" style="left:286px;top:396.9px;font-size:9px;letter-spacing:0.328px;">btnChange</span>
<span class="t" style="left:339px;top:396.9px;color:#8a8d8f;font-size:7.6px;letter-spacing:0.297px;">&quot;C...</span>
<svg class="a" style="left:362px;top:398.8px;" width="9.0" height="8.0" viewBox="0 0 9 8"><path d="M4.5 0.2 8.9 7.8H0.1Z" fill="#f0a732"/><path d="M4.5 2.8V5.4M4.5 6.1V7" stroke="#3d3f41" stroke-width="0.9"/></svg>
<div class="a" style="left:393px;top:76px;width:409.5px;height:18.3px;background:#3d3f41;"></div>
<div class="a" style="left:393px;top:94.3px;width:409.5px;height:0.7px;background:#323232;"></div>
<div class="a" style="left:393px;top:95px;width:409.5px;height:17.5px;background:#3d3f41;"></div>
<div class="a" style="left:393px;top:112.5px;width:409.5px;height:0.7px;background:#323232;"></div>
<div class="a" style="left:393px;top:113.2px;width:409.5px;height:481.3px;background:#2d2f31;"></div>
<div class="a" style="left:802.5px;top:76px;width:0.7px;height:518.5px;background:#2b2b2b;"></div>
<svg class="a" style="left:397px;top:79px;" width="12" height="12.5" viewBox="0 0 12 12.5"><path d="M5.5 0.5 10.6 3.6 5.5 6.7 0.4 3.6Z" fill="#3aa0e8"/><path d="M0.8 6 5.5 8.9 10.2 6" fill="none" stroke="#3aa0e8" stroke-width="1.3"/><path d="M8.4 10.4h3.4l-1.7 2z" fill="#afb1b3"/></svg>
<div class="a" style="left:413.3px;top:79px;width:0.7px;height:12px;background:#515355;"></div>
<svg class="a" style="left:419px;top:79px;" width="12.5" height="12.5" viewBox="0 0 12.5 12.5"><rect x="3.4" y="1.6" width="5.6" height="9" rx="1" transform="rotate(-42 6.2 6.1)" fill="none" stroke="#afb1b3" stroke-width="1"/><path d="M1 7.6A5.4 5.4 0 0 0 4.6 11.2M11.2 4.4A5.4 5.4 0 0 0 7.8 1" fill="none" stroke="#afb1b3" stroke-width="0.8"/><path d="M9.2 10.6h3.2l-1.6 1.9z" fill="#afb1b3"/></svg>
<div class="a" style="left:436.3px;top:79px;width:0.7px;height:12px;background:#515355;"></div>
<svg class="a" style="left:444px;top:80.5px;" width="6.5" height="9.5" viewBox="0 0 6.5 9.5"><rect x="0.6" y="0.5" width="5" height="8.4" rx="0.8" fill="none" stroke="#afb1b3" stroke-width="1"/><path d="M0.6 7.4h5" stroke="#afb1b3" stroke-width="0.8"/></svg>
<span class="t" style="left:454px;top:79.2px;color:#c8c8c8;font-size:9.3px;letter-spacing:0.069px;">Pixel</span>
<svg class="a" style="left:477.5px;top:84.1px;" width="5" height="3.4" viewBox="0 0 5 3.4"><path d="M0.4 0.4 2.5 2.8 4.6 0.4" fill="none" stroke="#8a8d8f" stroke-width="0.8"/></svg>
<svg class="a" style="left:492px;top:82.3px;" width="9" height="6" viewBox="0 0 9 6"><path d="M0 6 A4.5 4.6 0 0 1 9 6 Z" fill="#3ddc84"/><path d="M1.8 0.3 2.9 2 M7.2 0.3 6.1 2" stroke="#3ddc84" stroke-width="0.7"/><circle cx="2.9" cy="4" r="0.5" fill="#3d3f41"/><circle cx="6.1" cy="4" r="0.5" fill="#3d3f41"/></svg>
<span class="t" style="left:504px;top:79.2px;color:#c8c8c8;font-size:9.3px;letter-spacing:0.078px;">30</span>
<svg class="a" style="left:517.0px;top:84.1px;" width="5" height="3.4" viewBox="0 0 5 3.4"><path d="M0.4 0.4 2.5 2.8 4.6 0.4" fill="none" stroke="#8a8d8f" stroke-width="0.8"/></svg>
<svg class="a" style="left:532.5px;top:80.7px;" width="9" height="9" viewBox="0 0 9 9"><circle cx="4.5" cy="4.5" r="3.9" fill="none" stroke="#afb1b3" stroke-width="0.9"/><circle cx="4.5" cy="4.5" r="2" fill="#afb1b3"/><circle cx="5.3" cy="4.5" r="1.3" fill="#3d3f41"/></svg>
<span class="t" style="left:544px;top:79.2px;color:#c8c8c8;font-size:9.3px;letter-spacing:0.158px;">BasicSample</span>
<svg class="a" style="left:603.0px;top:84.1px;" width="5" height="3.4" viewBox="0 0 5 3.4"><path d="M0.4 0.4 2.5 2.8 4.6 0.4" fill="none" stroke="#8a8d8f" stroke-width="0.8"/></svg>
<div class="a" style="left:613.3px;top:79px;width:0.7px;height:12px;background:#515355;"></div>
<svg class="a" style="left:620.5px;top:80.7px;" width="9" height="9" viewBox="0 0 9 9"><circle cx="4.5" cy="4.5" r="4.2" fill="#b4b6b8"/><path d="M1.2 2.6c1.4-0.2 2.8 0.4 2.6 1.6S2.6 5.4 3.2 6.6 4.6 7.4 4.2 8.6C2 8.4 0.6 6.4 0.6 4.5 0.6 3.8 0.8 3.2 1.2 2.6ZM5.4 0.7C7 1 8.2 2.4 8.4 4 7.6 3.6 6.6 4.4 6.2 3.6S5.8 1.8 5.4 0.7ZM6.4 5.4c0.8-0.2 1.4 0.2 1.6 0.6-0.2 0.8-0.8 1.6-1.4 2C6.2 7.2 5.8 5.8 6.4 5.4Z" fill="#3d3f41"/></svg>
<span class="t" style="left:632px;top:79.2px;color:#c8c8c8;font-size:9.3px;letter-spacing:0.267px;">Default (en-us)</span>
<svg class="a" style="left:701.0px;top:84.1px;" width="5" height="3.4" viewBox="0 0 5 3.4"><path d="M0.4 0.4 2.5 2.8 4.6 0.4" fill="none" stroke="#8a8d8f" stroke-width="0.8"/></svg>
<svg class="a" style="left:788px;top:81px;" width="9.450000000000001" height="8.4" viewBox="0 0 9 8"><path d="M4.5 0.2 8.9 7.8H0.1Z" fill="#f0a732"/><path d="M4.5 2.8V5.4M4.5 6.1V7" stroke="#3d3f41" stroke-width="0.9"/></svg>
<svg class="a" style="left:398px;top:99.7px;" width="11" height="9.5" viewBox="0 0 11 9.5"><path d="M0.4 4C2 1.4 3.6 0.6 5 0.6S8 1.4 9.6 4C8 6.6 6.4 7.4 5 7.4S2 6.6 0.4 4Z" fill="#afb1b3"/><circle cx="5" cy="4" r="2.1" fill="#3d3f41"/><circle cx="5" cy="4" r="1" fill="#afb1b3"/><path d="M7.6 7.6h3.2L9.2 9.4z" fill="#afb1b3"/></svg>
<svg class="a" style="left:415px;top:99.2px;" width="10" height="10" viewBox="0 0 10 10"><path d="M1.6 2v3.4a3.4 3.4 0 0 0 6.8 0V2" fill="none" stroke="#afb1b3" stroke-width="1.8"/><path d="M0.6 0.6 9.4 9.4" stroke="#3592c4" stroke-width="1"/></svg>
<span class="t" style="left:433.5px;top:97.1px;color:#c8c8c8;font-size:8.8px;letter-spacing:0.438px;">0dp</span>
<svg class="a" style="left:431px;top:106.10000000000001px;" width="21" height="3.6" viewBox="0 0 21 3.6"><path d="M0.5 0v3h20V0" fill="none" stroke="#8a8d8f" stroke-width="0.8"/></svg>
<div class="a" style="left:457px;top:97.5px;width:0.7px;height:12.5px;background:#515355;"></div>
<svg class="a" style="left:462px;top:98.7px;" width="12" height="10.5" viewBox="0 0 12 10.5"><path d="M1 8.6h1.6c1.6 0 1.8-1 1.8-2.4V4c0-1.4 0.4-2.4 2-2.4H8" fill="none" stroke="#afb1b3" stroke-width="1.1"/><circle cx="1.4" cy="8.6" r="1.1" fill="#afb1b3"/><path d="M7.4 6.4 10.4 9.6M10.4 6.4 7.4 9.6" stroke="#e05555" stroke-width="0.9"/></svg>
<svg class="a" style="left:480px;top:98.7px;" width="11" height="10.5" viewBox="0 0 11 10.5"><path d="M0.8 9.6 6.4 4" stroke="#afb1b3" stroke-width="1.5"/><path d="M7.6 0.4v2M7.6 4.2v1.4M5.4 2.8h1.4M8.6 2.8h2M6 1.2l0.8 0.8M9.2 1.2l-0.8 0.8M9.2 4.6l-0.8-0.8" stroke="#afb1b3" stroke-width="0.7"/></svg>
<div class="a" style="left:496.3px;top:97.5px;width:0.7px;height:12.5px;background:#515355;"></div>
<svg class="a" style="left:502px;top:98.7px;" width="11" height="10.5" viewBox="0 0 11 10.5"><path d="M1.6 0.4v9.6M0.2 2 1.6 0.4 3 2M0.2 8.4 1.6 10 3 8.4" fill="none" stroke="#afb1b3" stroke-width="0.8"/><path d="M4.6 1.6h6M4.6 4h6M4.6 6.4h6M4.6 8.8h6" stroke="#afb1b3" stroke-width="1.2"/><path d="M7.6 0.6v9" stroke="#3d3f41" stroke-width="0.8"/></svg>
<svg class="a" style="left:519px;top:98.7px;" width="12" height="11" viewBox="0 0 12 11"><path d="M1 0.4v9" stroke="#afb1b3" stroke-width="1"/><rect x="2.4" y="1.4" width="5" height="2.6" fill="#afb1b3"/><rect x="2.4" y="5.4" width="8" height="2.6" fill="#afb1b3"/><path d="M8.4 9h3.2L10 10.8z" fill="#afb1b3"/></svg>
<svg class="a" style="left:537px;top:98.7px;" width="11" height="11" viewBox="0 0 11 11"><path d="M1.4 0.8h6M4.4 0.8v6.4M1.4 7.2h6" fill="none" stroke="#afb1b3" stroke-width="1"/><path d="M0.6 9.4h8" stroke="#afb1b3" stroke-width="1"/><path d="M7.6 9.4h3.2L9.2 11z" fill="#afb1b3"/></svg>
<svg class="a" style="left:789px;top:99.4px;" width="8.6" height="8.6" viewBox="0 0 8.6 8.6"><circle cx="4.3" cy="4.3" r="4.2" fill="#3a93d4"/><path d="M3 3.4c0-1.6 2.6-1.6 2.6 0 0 1-1.3 1-1.3 2.2M4.3 6.4v0.9" fill="none" stroke="#2d2f31" stroke-width="0.9"/></svg>
<svg class="a" style="left:651.2px;top:131.2px;" width="7" height="10" viewBox="0 0 7 10"><path d="M1.6 0.3A2.9 2.9 0 0 0 2.5 5.4V9.6h1.8V5.4A2.9 2.9 0 0 0 5.2 0.3V2.8H1.6Z" fill="#bcbec0"/></svg>
<div class="a" style="left:425.8px;top:146.2px;width:237.4px;height:422.8px;background:#ffffff;box-shadow:0 0 2px rgba(0,0,0,.5);"></div>
<div class="a" style="left:505px;top:161.4px;width:79.3px;height:21.2px;background:#6200ee;border-radius:2px;box-shadow:0 0.5px 1px rgba(0,0,0,.35);"></div>
<span class="t" style="left:514.5px;top:166.8px;color:#ffffff;font-size:8.1px;letter-spacing:0.307px;-webkit-text-stroke:0.3px #fff;">CHANGE TEXT</span>
<span class="t" style="left:441.9px;top:198.1px;color:#707070;font-size:8.2px;letter-spacing:0.079px;-webkit-text-stroke:0;">ello World!</span>
<div class="a" style="left:437.6px;top:196.95px;width:214.7px;height:0.8px;background:#3f95f8;"></div>
<div class="a" style="left:437.6px;top:208.05px;width:214.7px;height:0.8px;background:#3f95f8;"></div>
<div class="a" style="left:435.40000000000003px;top:195px;width:4.8px;height:2.9px;background:#1886f7;"></div>
<div class="a" style="left:435.40000000000003px;top:208px;width:4.8px;height:2.8px;background:#1886f7;"></div>
<div class="a" style="left:649.8000000000001px;top:195px;width:4.8px;height:2.9px;background:#1886f7;"></div>
<div class="a" style="left:649.8000000000001px;top:208px;width:4.8px;height:2.8px;background:#1886f7;"></div>
<div class="a" style="left:433.8px;top:199.2px;width:7.8px;height:7.8px;background:#1886f7;border-radius:50%;"></div>
<div class="a" style="left:648.3000000000001px;top:199.2px;width:7.8px;height:7.8px;background:#1886f7;border-radius:50%;"></div>
<div class="a" style="left:540.8px;top:190.7px;width:8.0px;height:8.0px;background:#1886f7;border-radius:50%;"></div>
<div class="a" style="left:540.9px;top:207.0px;width:7.8px;height:7.8px;background:#ffffff;border-radius:50%;border:1px solid #1886f7;"></div>
<svg class="a" style="left:425.8px;top:199.3px;" width="9" height="6.2" viewBox="0 0 9 6.2"><path d="M0.1 3.1 4.2 0.1V6.1Z" fill="#1886f7"/><path d="M4 3.1h5" stroke="#1886f7" stroke-width="0.8"/></svg>
<svg class="a" style="left:654.2px;top:199.3px;" width="9" height="6.2" viewBox="0 0 9 6.2"><path d="M8.9 3.1 4.8 0.1V6.1Z" fill="#1886f7"/><path d="M0 3.1h5" stroke="#1886f7" stroke-width="0.8"/></svg>
<svg class="a" style="left:541.6px;top:186px;" width="6.6" height="3.8" viewBox="0 0 6.6 3.8"><path d="M0.3 3.6 3.3 0.3 6.3 3.6Z" fill="#1886f7"/></svg>
<svg class="a" style="left:588px;top:185px;" width="26" height="13" viewBox="0 0 26 13"><path d="M0.5 1h23" stroke="#a9cdf5" stroke-width="1" stroke-dasharray="2.6 3.4"/><path d="M10.2 1.6V12" stroke="#c8c8c8" stroke-width="1"/><path d="M8.6 11.6h3" stroke="#c8c8c8" stroke-width="0.7"/></svg>
<span class="t" style="left:603.4px;top:186.9px;color:#b4b4b4;font-size:8.4px;letter-spacing:-0.364px;">20</span>
<div class="a" style="left:694.1px;top:146.2px;width:108.4px;height:423.6px;background:#387386;border-left:1px dashed #4a879d;border-top:1px dashed #4a879d;border-bottom:1px dashed #4a879d;"></div>
<div class="a" style="left:773.8px;top:158px;width:28.7px;height:28.6px;background:#44808f;border:1px dashed #6aa4b6;border-right:none;"></div>
<div class="a" style="left:775.8px;top:160px;width:26.7px;height:24.6px;border:1px solid #5f9aad;border-right:none;"></div>
<span class="t" style="left:789px;top:166.4px;color:#8ec3d4;font-size:8.3px;letter-spacing:-0.844px;clip-path:inset(0 1.5px 0 0);">CHA</span>
<div class="a" style="left:706.5px;top:196.8px;width:96.0px;height:12.1px;background:#5b9bb2;border-top:1px dashed #b9d8e4;border-bottom:1px dashed #b9d8e4;"></div>
<span class="t" style="left:711px;top:197.6px;color:#a9d4e2;font-size:8px;letter-spacing:-0.332px;">ello World!</span>
<div class="a" style="left:704.1px;top:194.8px;width:4.9px;height:2.6px;background:#e8f2f6;"></div>
<div class="a" style="left:704.1px;top:208.3px;width:4.9px;height:2.6px;background:#e8f2f6;"></div>
<div class="a" style="left:702.5px;top:198.9px;width:8.2px;height:8.2px;background:#e6eef4;border-radius:50%;"></div>
<svg class="a" style="left:695px;top:200px;" width="9" height="6" viewBox="0 0 9 6"><path d="M0.2 3 4 0.2V5.8Z" fill="#e8f2f6"/><path d="M4 3h5" stroke="#e8f2f6" stroke-width="0.8"/></svg>
<svg class="a" style="left:664px;top:570px;" width="15" height="14" viewBox="0 0 15 14"><path d="M1.3 12.5 13 1M7 12.5 13 6.5" stroke="#7a7c7e" stroke-width="0.7"/></svg>
<div class="a" style="left:773.9px;top:487.8px;width:17.8px;height:18.9px;background:#3e4143;border-radius:2.5px;"></div>
<svg class="a" style="left:778px;top:491.5px;" width="10" height="11" viewBox="0 0 10 11"><path d="M2.2 5.6V2.4c0-0.8 1.1-0.8 1.1 0V1.4c0-0.8 1.2-0.8 1.2 0v0.4c0-0.8 1.2-0.8 1.2 0V2.4c0-0.8 1.2-0.8 1.2 0V7c0 2-1 3.4-2.8 3.4S2 9.4 1.4 8.2L0.4 6c-0.3-0.7 0.6-1.2 1-0.6Z" fill="#c4c6c8"/></svg>
<div class="a" style="left:773.9px;top:510.2px;width:17.8px;height:70.4px;background:#3e4143;border-radius:2.5px;"></div>
<svg class="a" style="left:778.2px;top:515.5px;" width="9" height="9" viewBox="0 0 9 9"><path d="M4.5 1.2v6.6M1.2 4.5h6.6" stroke="#c0c2c4" stroke-width="1"/></svg>
<svg class="a" style="left:778.2px;top:532px;" width="9" height="9" viewBox="0 0 9 9"><path d="M1.2 4.5h6.6" stroke="#c0c2c4" stroke-width="1"/></svg>
<span class="t b" style="left:778.6px;top:547.9px;color:#c0c2c4;font-size:6.8px;letter-spacing:-0.343px;">1:1</span>
<svg class="a" style="left:777.8px;top:566.6px;" width="10" height="9" viewBox="0 0 10 9"><rect x="0.7" y="0.7" width="8.6" height="7.2" fill="none" stroke="#c0c2c4" stroke-width="1"/><path d="M2.4 4V2.6H4M7.6 4.6V6H6" fill="none" stroke="#c0c2c4" stroke-width="0.8"/></svg>
<div class="a" style="left:245.3px;top:594.5px;width:763.2px;height:14.0px;background:#313335;"></div>
<div class="a" style="left:245.3px;top:594.3px;width:763.2px;height:0.7px;background:#3a3c3e;"></div>
<span class="t" style="left:287px;top:595.6px;letter-spacing:0.344px;">layout</span>
<svg class="a" style="left:318px;top:596.6px;" width="5" height="10" viewBox="0 0 5 10"><path d="M0.8 0.5 L4 5 L0.8 9.5" fill="none" stroke="#6a6d6f" stroke-width="0.8"/></svg>
<span class="t" style="left:328px;top:595.6px;letter-spacing:0.201px;">androidx.constraintlayout.widget.ConstraintLayout</span>
<svg class="a" style="left:534px;top:596.6px;" width="5" height="10" viewBox="0 0 5 10"><path d="M0.8 0.5 L4 5 L0.8 9.5" fill="none" stroke="#6a6d6f" stroke-width="0.8"/></svg>
<span class="t" style="left:544px;top:595.6px;letter-spacing:0.19px;">Button</span>
<div class="a" style="left:803.2px;top:76px;width:205.3px;height:18.3px;background:#3d3f41;"></div>
<span class="t" style="left:806.5px;top:78.8px;letter-spacing:-0.081px;">Attributes</span>
<svg class="a" style="left:960.55px;top:80.15px;" width="9.9" height="9.9" viewBox="0 0 11 11"><circle cx="4.4" cy="4.4" r="3.5" fill="none" stroke="#b4b6b8" stroke-width="1.2"/><path d="M7 7 10.4 10.4" stroke="#b4b6b8" stroke-width="1.5"/></svg>
<svg class="a" style="left:978.15px;top:80.35000000000001px;" width="8.7" height="8.7" viewBox="0 0 10 10"><circle cx="5" cy="5" r="2.75" fill="none" stroke="#b4b6b8" stroke-width="2.1"/><path d="M5.00 8.00L5.00 9.95" stroke="#b4b6b8" stroke-width="2.5"/><path d="M2.40 6.50L0.71 7.48" stroke="#b4b6b8" stroke-width="2.5"/><path d="M2.40 3.50L0.71 2.53" stroke="#b4b6b8" stroke-width="2.5"/><path d="M5.00 2.00L5.00 0.05" stroke="#b4b6b8" stroke-width="2.5"/><path d="M7.60 3.50L9.29 2.52" stroke="#b4b6b8" stroke-width="2.5"/><path d="M7.60 6.50L9.29 7.47" stroke="#b4b6b8" stroke-width="2.5"/></svg>
<div class="a" style="left:995.25px;top:84.3px;width:8.5px;height:1.3px;background:#b4b6b8;"></div>
<div class="a" style="left:803.2px;top:94.3px;width:205.3px;height:500.2px;background:#313335;"></div>
<div class="a" style="left:999px;top:110px;width:9.5px;height:484.5px;background:#424446;"></div>
<span class="t" style="left:806px;top:96.6px;color:#c8ccd0;font-size:8px;letter-spacing:-0.148px;">Ab</span>
<span class="t" style="left:818px;top:97px;color:#d4d4d4;font-size:9.8px;letter-spacing:0.041px;">txtHello</span>
<span class="t" style="left:968px;top:97px;color:#77797b;font-size:9.6px;letter-spacing:-0.152px;">TextView</span>
<div class="a" style="left:803.2px;top:110px;width:195.8px;height:116.5px;background:#313335;"></div>
<div class="a" style="left:803.2px;top:115.85000000000001px;width:195.8px;height:0.7px;background:#3b3e40;"></div>
<div class="a" style="left:803.2px;top:131.65px;width:195.8px;height:0.7px;background:#3b3e40;"></div>
<div class="a" style="left:803.2px;top:147.4px;width:195.8px;height:0.7px;background:#3b3e40;"></div>
<div class="a" style="left:803.2px;top:163.15px;width:195.8px;height:0.7px;background:#3b3e40;"></div>
<div class="a" style="left:803.2px;top:178.95000000000002px;width:195.8px;height:0.7px;background:#3b3e40;"></div>
<div class="a" style="left:803.2px;top:194.65px;width:195.8px;height:0.7px;background:#3b3e40;"></div>
<div class="a" style="left:803.2px;top:210.45000000000002px;width:195.8px;height:0.7px;background:#3b3e40;"></div>
<div class="a" style="left:803.2px;top:226.15px;width:195.8px;height:0.7px;background:#3b3e40;"></div>
<div class="a" style="left:881.5px;top:110px;width:0.7px;height:116.5px;background:#3b3e40;"></div>
<span class="t" style="left:811px;top:102.3px;color:#9a9c9e;font-size:8.4px;letter-spacing:0.094px;clip-path:inset(5.6px 0 0 0);">layout_constrai...</span>
<span class="t" style="left:893px;top:102.3px;color:#9a9c9e;font-size:9.6px;letter-spacing:-0.53px;clip-path:inset(5.6px 0 0 0);">@+id/btnChange</span>
<div class="a" style="left:973px;top:110px;width:14px;height:3.8px;background:#43474a;"></div>
<span class="t" style="left:811px;top:118.1px;color:#b4b6b8;font-size:8.4px;letter-spacing:0.094px;">layout_constrai...</span>
<span class="t" style="left:888px;top:118.3px;color:#c8c8c8;font-size:9.8px;letter-spacing:-0.047px;">parent</span>
<div class="a" style="left:973px;top:118.89999999999999px;width:14px;height:10.4px;background:#43474a;"></div>
<svg class="a" style="left:977.7px;top:122.89999999999999px;" width="4.6" height="2.8" viewBox="0 0 4.6 2.8"><path d="M0 0H4.6L2.3 2.8Z" fill="#a8aaac"/></svg>
<svg class="a" style="left:991.4px;top:118.69999999999999px;" width="4" height="10.8" viewBox="0 0 4 10.8"><rect x="0.6" y="0.6" width="2.6" height="9.6" rx="1" fill="none" stroke="#5e6163" stroke-width="0.7"/></svg>
<span class="t" style="left:811px;top:133.88px;color:#b4b6b8;font-size:8.4px;letter-spacing:0.094px;">layout_constrai...</span>
<span class="t" style="left:888px;top:134.07px;color:#c8c8c8;font-size:9.8px;letter-spacing:-0.047px;">parent</span>
<div class="a" style="left:973px;top:134.675px;width:14px;height:10.4px;background:#43474a;"></div>
<svg class="a" style="left:977.7px;top:138.67499999999998px;" width="4.6" height="2.8" viewBox="0 0 4.6 2.8"><path d="M0 0H4.6L2.3 2.8Z" fill="#a8aaac"/></svg>
<svg class="a" style="left:991.4px;top:134.475px;" width="4" height="10.8" viewBox="0 0 4 10.8"><rect x="0.6" y="0.6" width="2.6" height="9.6" rx="1" fill="none" stroke="#5e6163" stroke-width="0.7"/></svg>
<span class="t" style="left:811px;top:149.62px;color:#b4b6b8;font-size:8.4px;letter-spacing:0.025px;">layout_marginLeft</span>
<span class="t" style="left:886.5px;top:149.82px;color:#c8c8c8;font-size:9.8px;letter-spacing:-0.074px;">20dp</span>
<svg class="a" style="left:991.4px;top:150.225px;" width="4" height="10.8" viewBox="0 0 4 10.8"><rect x="0.6" y="0.6" width="2.6" height="9.6" rx="1" fill="none" stroke="#5e6163" stroke-width="0.7"/></svg>
<span class="t" style="left:811px;top:165.4px;color:#b4b6b8;font-size:8.4px;letter-spacing:-0.101px;">layout_marginTop</span>
<span class="t" style="left:886.5px;top:165.6px;color:#c8c8c8;font-size:9.8px;letter-spacing:-0.074px;">20dp</span>
<svg class="a" style="left:991.4px;top:166.0px;" width="4" height="10.8" viewBox="0 0 4 10.8"><rect x="0.6" y="0.6" width="2.6" height="9.6" rx="1" fill="none" stroke="#5e6163" stroke-width="0.7"/></svg>
<span class="t" style="left:811px;top:181.15px;color:#b4b6b8;font-size:8.4px;letter-spacing:-0.028px;">layout_marginRi...</span>
<span class="t" style="left:886.5px;top:181.35px;color:#c8c8c8;font-size:9.8px;letter-spacing:-0.074px;">20dp</span>
<svg class="a" style="left:991.4px;top:181.75px;" width="4" height="10.8" viewBox="0 0 4 10.8"><rect x="0.6" y="0.6" width="2.6" height="9.6" rx="1" fill="none" stroke="#5e6163" stroke-width="0.7"/></svg>
<span class="t" style="left:811px;top:196.9px;color:#b4b6b8;font-size:8.4px;letter-spacing:-0.016px;">id</span>
<span class="t" style="left:886.5px;top:197.1px;color:#c8c8c8;font-size:9.8px;letter-spacing:-0.021px;">txtHello</span>
<span class="t" style="left:811px;top:212.65px;color:#b4b6b8;font-size:8.4px;letter-spacing:0.125px;">text</span>
<span class="t" style="left:886.5px;top:212.85px;color:#c8c8c8;font-size:9.8px;letter-spacing:-0.057px;">Hello World!</span>
<svg class="a" style="left:991.4px;top:213.25px;" width="4" height="10.8" viewBox="0 0 4 10.8"><rect x="0.6" y="0.6" width="2.6" height="9.6" rx="1" fill="none" stroke="#5e6163" stroke-width="0.7"/></svg>
<div class="a" style="left:1001px;top:124.5px;width:5px;height:68.0px;background:#595c5e;border-radius:2.5px;"></div>
<div class="a" style="left:803.2px;top:229px;width:195.8px;height:16px;background:#3d3f41;"></div>
<svg class="a" style="left:808px;top:234.5px;" width="6" height="5" viewBox="0 0 6 5"><path d="M0 0.2H6L3 4.8Z" fill="#b0b0b0"/></svg>
<span class="t b" style="left:816px;top:231.5px;color:#c8c8c8;font-size:9.4px;letter-spacing:-0.039px;">Layout</span>
<span class="t" style="left:808.5px;top:249.3px;color:#c0c0c0;font-size:9.3px;letter-spacing:0.242px;">Constraint Widget</span>
<div class="a" style="left:881.2px;top:277px;width:39.6px;height:11.8px;background:#45494a;border:0.8px solid #646769;border-radius:1.5px;"></div>
<div class="a" style="left:905.8px;top:277.8px;width:0.7px;height:10.2px;background:#585b5d;"></div>
<span class="t" style="left:885.8000000000001px;top:277.1px;color:#d0d0d0;font-size:9px;letter-spacing:-0.208px;">20</span>
<svg class="a" style="left:910.8px;top:281.7px;" width="4.8" height="3" viewBox="0 0 4.8 3"><path d="M0 0H4.8L2.4 3Z" fill="#c0c0c0"/></svg>
<div class="a" style="left:832px;top:312.2px;width:39.6px;height:12.1px;background:#45494a;border:0.8px solid #646769;border-radius:1.5px;"></div>
<div class="a" style="left:856.6px;top:313.0px;width:0.7px;height:10.5px;background:#585b5d;"></div>
<span class="t" style="left:836.6px;top:312.45px;color:#d0d0d0;font-size:9px;letter-spacing:-0.208px;">20</span>
<svg class="a" style="left:861.6px;top:317.05px;" width="4.8" height="3" viewBox="0 0 4.8 3"><path d="M0 0H4.8L2.4 3Z" fill="#c0c0c0"/></svg>
<div class="a" style="left:930.6px;top:312.2px;width:39.4px;height:12.1px;background:#45494a;border:0.8px solid #646769;border-radius:1.5px;"></div>
<div class="a" style="left:955px;top:313.0px;width:0.7px;height:10.5px;background:#585b5d;"></div>
<span class="t" style="left:935.2px;top:312.45px;color:#d0d0d0;font-size:9px;letter-spacing:-0.208px;">20</span>
<svg class="a" style="left:960.0px;top:317.05px;" width="4.8" height="3" viewBox="0 0 4.8 3"><path d="M0 0H4.8L2.4 3Z" fill="#c0c0c0"/></svg>
<div class="a" style="left:881px;top:299px;width:40.4px;height:39.6px;border:1px solid #808080;"></div>
<svg class="a" style="left:881px;top:299px;" width="8" height="8" viewBox="0 0 8 8"><path d="M1 7 7 1" stroke="#808080" stroke-width="0.8"/></svg>
<div class="a" style="left:900.6px;top:291px;width:1.0px;height:8px;background:#808080;"></div>
<div class="a" style="left:898.0px;top:296.2px;width:6.2px;height:6.2px;background:#808080;border-radius:50%;"></div>
<div class="a" style="left:873.5px;top:318.3px;width:7.5px;height:1.0px;background:#808080;"></div>
<div class="a" style="left:878.1999999999999px;top:315.7px;width:6.2px;height:6.2px;background:#808080;border-radius:50%;"></div>
<div class="a" style="left:921px;top:318.3px;width:8px;height:1.0px;background:#808080;"></div>
<div class="a" style="left:918.1px;top:315.7px;width:6.2px;height:6.2px;background:#808080;border-radius:50%;"></div>
<svg class="a" style="left:897.6px;top:303.5px;" width="7" height="9" viewBox="0 0 7 9"><path d="M0.6 0.8 3.5 3.6 6.4 0.8M0.6 4.6 3.5 7.4 6.4 4.6" fill="none" stroke="#808080" stroke-width="0.8"/></svg>
<svg class="a" style="left:897.6px;top:324.6px;" width="7" height="9" viewBox="0 0 7 9"><path d="M0.6 4.4 3.5 1.6 6.4 4.4M0.6 8.2 3.5 5.4 6.4 8.2" fill="none" stroke="#808080" stroke-width="0.8"/></svg>
<svg class="a" style="left:887px;top:316.2px;" width="10" height="5.2" viewBox="0 0 10 5.2"><path d="M0.5 0V5.2M9.5 0V5.2M0.5 2.6h9M3.4 0.8V4.4M6.6 0.8V4.4" fill="none" stroke="#808080" stroke-width="0.7"/></svg>
<svg class="a" style="left:905.4px;top:316.2px;" width="10" height="5.2" viewBox="0 0 10 5.2"><path d="M0.5 0V5.2M9.5 0V5.2M0.5 2.6h9M3.4 0.8V4.4M6.6 0.8V4.4" fill="none" stroke="#808080" stroke-width="0.7"/></svg>
<div class="a" style="left:900.7px;top:339px;width:0.8px;height:6.5px;border-left:1px dotted #808080;"></div>
<div class="a" style="left:896.5px;top:347.0px;width:9.2px;height:9.2px;background:#3592c4;border-radius:50%;"></div>
<svg class="a" style="left:897.6px;top:348.1px;" width="7" height="7" viewBox="0 0 7 7"><path d="M3.5 0.7V6.3M0.7 3.5H6.3" stroke="#26282a" stroke-width="1.3"/></svg>
<div class="a" style="left:869px;top:369px;width:64.5px;height:2.6px;background:#2b2b2b;border-radius:1.3px;"></div>
<div class="a" style="left:895.5px;top:364.59999999999997px;width:11.2px;height:11.2px;background:#505254;border-radius:50%;border:0.9px solid #8a8c8e;"></div>
<span class="t" style="left:897.4px;top:364.4px;color:#9a9c9e;font-size:6.2px;letter-spacing:0.255px;">50</span>
<svg class="a" style="left:808.3px;top:393.4px;" width="5" height="6.4" viewBox="0 0 5 6.4"><path d="M0.2 0.2 4.8 3.2 0.2 6.2Z" fill="#c4c4c4"/></svg>
<span class="t" style="left:817px;top:390.5px;color:#cfcfcf;font-size:9.6px;letter-spacing:0.043px;">Constraints</span>
<span class="t" style="left:870px;top:390.5px;color:#a8aaac;font-size:9.6px;letter-spacing:-0.378px;">(3)</span>
<div class="a" style="left:805px;top:406.2px;width:192px;height:0.7px;background:#46494b;"></div>
<span class="t" style="left:808.3px;top:412.7px;color:#b4b6b8;font-size:8.4px;letter-spacing:0.011px;">layout_width</span>
<span class="t" style="left:808.3px;top:429.6px;color:#b4b6b8;font-size:8.4px;letter-spacing:-0.01px;">layout_height</span>
<span class="t" style="left:808.3px;top:446.9px;color:#b4b6b8;font-size:8.4px;letter-spacing:-0.016px;">visibility</span>
<svg class="a" style="left:807.8px;top:465.6px;" width="8" height="8.6" viewBox="0 0 8 8.6"><path d="M0.6 7 4.2 3.4A2.2 2.2 0 0 1 7 0.8L5.6 2.2 6.2 3 7.6 1.8A2.2 2.2 0 0 1 5 4.4L1.6 7.9Z" fill="#b4b6b8"/></svg>
<span class="t" style="left:817px;top:464.1px;color:#b4b6b8;font-size:8.4px;letter-spacing:0.014px;">visibility</span>
<div class="a" style="left:883.4px;top:446px;width:104.4px;height:13.2px;background:#313335;border:0.8px solid #5e6163;border-radius:2px;"></div>
<div class="a" style="left:972.5px;top:446.8px;width:0.7px;height:11.6px;background:#4e5153;"></div>
<svg class="a" style="left:976.6999999999999px;top:451.3px;" width="5" height="3" viewBox="0 0 5 3"><path d="M0 0H5L2.5 3Z" fill="#b8babc"/></svg>
<div class="a" style="left:883.4px;top:463.5px;width:104.4px;height:12.7px;background:#313335;border:0.8px solid #5e6163;border-radius:2px;"></div>
<div class="a" style="left:972.5px;top:464.3px;width:0.7px;height:11.1px;background:#4e5153;"></div>
<svg class="a" style="left:976.6999999999999px;top:468.55px;" width="5" height="3" viewBox="0 0 5 3"><path d="M0 0H5L2.5 3Z" fill="#b8babc"/></svg>
<div class="a" style="left:882px;top:410.6px;width:107.4px;height:15.8px;background:#3a638c;border-radius:3px;box-shadow:0 0 1.5px #3a638c;"></div>
<div class="a" style="left:883.4px;top:412px;width:104.6px;height:13px;background:#303335;border-radius:1.5px;"></div>
<div class="a" style="left:973px;top:412.6px;width:0.7px;height:11.8px;background:#4e5153;"></div>
<svg class="a" style="left:977.9px;top:417.3px;" width="5" height="3" viewBox="0 0 5 3"><path d="M0 0H5L2.5 3Z" fill="#b8babc"/></svg>
<div class="a" style="left:887px;top:413.6px;width:17.8px;height:10.0px;background:#2d5fc4;"></div>
<span class="t" style="left:887px;top:412.8px;color:#ffffff;font-size:9.6px;letter-spacing:0.395px;">0dp</span>
<svg class="a" style="left:991.4px;top:413.40000000000003px;" width="4" height="10.8" viewBox="0 0 4 10.8"><rect x="0.6" y="0.6" width="2.6" height="9.6" rx="1" fill="none" stroke="#5e6163" stroke-width="0.7"/></svg>
<div class="a" style="left:803.2px;top:482.4px;width:195.8px;height:14.2px;background:#3d3f41;"></div>
<svg class="a" style="left:808px;top:486.8px;" width="6" height="5" viewBox="0 0 6 5"><path d="M0 0.2H6L3 4.8Z" fill="#b0b0b0"/></svg>
<span class="t b" style="left:816px;top:483.4px;color:#c8c8c8;font-size:9.4px;letter-spacing:0.144px;">Transforms</span>
<div class="a" style="left:862.8px;top:526.2px;width:77.2px;height:60.8px;border:1px solid #2e8b45;"></div>
<div class="a" style="left:864.8px;top:528.2px;width:73.2px;height:56.8px;border:1px solid #2e8b45;"></div>
<svg class="a" style="left:870px;top:538px" width="62" height="32" viewBox="0 0 62 32"><text x="5.4" y="24" font-family="Liberation Sans, sans-serif" font-size="22.6" fill="none" stroke="#2e8b45" stroke-width="0.7" textLength="50.2" lengthAdjust="spacingAndGlyphs">View</text></svg>
<div class="a" style="left:1008.5px;top:39px;width:13.7px;height:569.5px;background:#3d3f41;"></div>
<div class="a" style="left:1008.3px;top:39px;width:0.8px;height:569.5px;background:#37393b;"></div>
<svg class="a" style="left:1010.5px;top:45.1px;" width="11.5" height="8.6" viewBox="0 0 11.5 8.6"><g transform="translate(1.6 0) skewX(-18)"><path d="M0.6 6.6C0.4 3.6 2.4 2 5 2.2 6.6 2.2 7.4 3 8 2.6 8.2 0.8 10.2 0.4 10.6 1.6 10.9 2.8 9.9 3.3 9.3 3.1 9.6 2.2 9 1.8 8.8 2.6 9 3.8 8.6 4.8 8.6 5.6V8.4H7.2V6.4H6V8.4H4.6V6.4H3.4V8.4H2V6.6Z" fill="#afb1b3"/></g></svg>
<span class="t" style="left:1015.2px;top:50.6px;letter-spacing:-0.199px;transform-origin:0 6px;transform:rotate(90deg);">Gradle</span>
<svg class="a" style="left:1011px;top:95.5px;" width="9" height="10" viewBox="0 0 9 10"><rect x="1.6" y="0.6" width="6.6" height="5.6" rx="0.8" fill="none" stroke="#afb1b3" stroke-width="1"/><rect x="0.5" y="3" width="3.6" height="6" rx="0.6" fill="#3d3f41" stroke="#afb1b3" stroke-width="0.9"/><path d="M5.6 9h3" stroke="#afb1b3" stroke-width="0.9"/></svg>
<span class="t" style="left:1015.2px;top:100px;letter-spacing:-0.065px;transform-origin:0 6px;transform:rotate(90deg);">Layout Validation</span>
<svg class="a" style="left:1011px;top:452.5px;" width="9" height="10" viewBox="0 0 9 10"><rect x="1" y="2" width="5" height="7.4" rx="0.8" fill="none" stroke="#afb1b3" stroke-width="1"/><rect x="5.8" y="0.4" width="2.6" height="2.6" fill="#b080e0"/></svg>
<span class="t" style="left:1015.2px;top:458.6px;letter-spacing:-0.299px;transform-origin:0 6px;transform:rotate(90deg);">Emulator</span>
<svg class="a" style="left:1011px;top:512.6px;" width="9" height="9" viewBox="0 0 9 9"><rect x="1" y="0.6" width="5.6" height="7.8" rx="0.8" fill="none" stroke="#afb1b3" stroke-width="1"/><rect x="4.4" y="2.6" width="4" height="3.4" fill="#3d3f41" stroke="#afb1b3" stroke-width="0.8"/></svg>
<span class="t" style="left:1015.2px;top:518px;letter-spacing:-0.195px;transform-origin:0 6px;transform:rotate(90deg);">Device File Explorer</span>
<div class="a" style="left:1.2px;top:608.5px;width:1021.0px;height:13.9px;background:#3d3f41;"></div>
<div class="a" style="left:1.2px;top:608.3px;width:1021.0px;height:0.7px;background:#323232;"></div>
<svg class="a" style="left:22px;top:612.3px;" width="7.5" height="7" viewBox="0 0 7.5 7"><path d="M0 0.8h7.5M0 3.5h7.5M0 6.2h7.5" stroke="#afb1b3" stroke-width="1.3"/><path d="M1.8 0v7" stroke="#3d3f41" stroke-width="0.6"/></svg>
<span class="t" style="left:32.5px;top:609.7px;letter-spacing:-1.043px;">TODO</span>
<svg class="a" style="left:68px;top:611.8px;" width="8.5" height="8" viewBox="0 0 8.5 8"><rect width="8.5" height="8" rx="0.8" fill="#afb1b3"/><path d="M1.6 2.2 3.6 4 1.6 5.8M4.4 6h2.6" fill="none" stroke="#3d3f41" stroke-width="0.9"/></svg>
<span class="t" style="left:79.3px;top:609.7px;letter-spacing:-0.223px;">Terminal</span>
<svg class="a" style="left:122.5px;top:611px;" width="9" height="9" viewBox="0 0 11 11"><g transform="rotate(-45 5.5 5.5)"><rect x="2.4" y="0.6" width="6.2" height="3" rx="0.5" fill="#afb1b3"/><rect x="4.7" y="3.4" width="1.7" height="8.6" fill="#afb1b3"/></g></svg>
<span class="t" style="left:134.5px;top:609.7px;letter-spacing:-0.062px;">Build</span>
<svg class="a" style="left:166px;top:612.2px;" width="8.5" height="7.5" viewBox="0 0 8.5 7.5"><path d="M0 0.8h8.5M0 3.6h5.5M0 6.4h7" stroke="#afb1b3" stroke-width="1.2"/></svg>
<span class="t" style="left:178px;top:609.7px;letter-spacing:0.219px;text-decoration:underline;">6</span>
<span class="t" style="left:183px;top:609.7px;letter-spacing:-0.01px;">: Logcat</span>
<svg class="a" style="left:226px;top:611.8px;" width="9" height="8" viewBox="0 0 9 8"><path d="M1 7.4A3.8 3.8 0 1 1 8 7.4" fill="none" stroke="#afb1b3" stroke-width="1.3"/><path d="M4.2 7.4 6.6 3.6" stroke="#afb1b3" stroke-width="1.2"/></svg>
<span class="t" style="left:237.5px;top:609.7px;letter-spacing:-0.092px;">Profiler</span>
<svg class="a" style="left:280px;top:611.3px;" width="8.5" height="9" viewBox="0 0 8.5 9"><ellipse cx="4.2" cy="1.8" rx="3.6" ry="1.5" fill="#afb1b3"/><path d="M0.6 3.4c0 2 7.2 2 7.2 0M0.6 5.6c0 2 7.2 2 7.2 0" fill="none" stroke="#afb1b3" stroke-width="1.1"/><path d="M0.6 1.8v5.4c0 2 7.2 2 7.2 0V1.8" fill="none" stroke="#afb1b3" stroke-width="0.9"/></svg>
<span class="t" style="left:292px;top:609.7px;letter-spacing:-0.168px;">Database Inspector</span>
<svg class="a" style="left:381px;top:612px;" width="8" height="8" viewBox="0 0 8 8"><path d="M0.6 0.4 6.4 3.7 0.6 7Z" fill="#afb1b3"/><circle cx="6" cy="6.6" r="1.2" fill="#3ddc84"/></svg>
<span class="t" style="left:391px;top:609.7px;letter-spacing:0.219px;text-decoration:underline;">4</span>
<span class="t" style="left:396px;top:609.7px;letter-spacing:-0.209px;">: Run</span>
<div class="a" style="left:863.0px;top:611.5px;width:8.4px;height:8.4px;background:#499c54;border-radius:50%;"></div>
<span class="t b" style="left:865.6px;top:609.8px;color:#ffffff;font-size:6.4px;letter-spacing:-0.163px;">1</span>
<span class="t" style="left:874px;top:609.7px;letter-spacing:-0.245px;">Event Log</span>
<svg class="a" style="left:926px;top:611.5px;" width="9.5" height="9" viewBox="0 0 9.5 9"><path d="M0.5 0.6h7v1.6H2.2v4.2H0.5z" fill="#afb1b3"/><rect x="2.6" y="2.8" width="5.6" height="4" fill="none" stroke="#afb1b3" stroke-width="0.8"/><circle cx="6.2" cy="5.6" r="1.5" fill="#3d3f41" stroke="#afb1b3" stroke-width="0.8"/><path d="M7.4 6.8 9 8.6" stroke="#afb1b3" stroke-width="0.9"/></svg>
<span class="t" style="left:937.5px;top:609.7px;letter-spacing:-0.159px;">Layout Inspector</span>
<div class="a" style="left:1.2px;top:622.4px;width:1021.0px;height:13.2px;background:#3d3f41;border-radius:0 0 6px 6px;"></div>
<div class="a" style="left:1.2px;top:622.2px;width:1021.0px;height:0.7px;background:#4a4d4f;"></div>
<svg class="a" style="left:4.6px;top:625px;" width="8" height="8.6" viewBox="0 0 8 8.6"><rect x="1.8" y="0.6" width="5.6" height="5.8" fill="none" stroke="#afb1b3" stroke-width="0.9"/><path d="M0.6 2v6h5.6" fill="none" stroke="#afb1b3" stroke-width="0.9"/></svg>
<span class="t" style="left:21.5px;top:623.3px;letter-spacing:-0.081px;">Success: Operation succeeded (today 11:35 AM)</span>
<span class="t" style="left:795px;top:623.3px;letter-spacing:-0.166px;">11 chars</span>
<span class="t" style="left:840px;top:623.3px;letter-spacing:-0.203px;">30:27</span>
<span class="t" style="left:868px;top:623.3px;letter-spacing:-0.266px;">LF</span>
<span class="t" style="left:885px;top:623.3px;color:#787a7c;letter-spacing:0.028px;">UTF-8</span>
<span class="t" style="left:917px;top:623.3px;letter-spacing:0.012px;">4 spaces</span>
<svg class="a" style="left:958px;top:624.5px;" width="8.5" height="9" viewBox="0 0 8.5 9"><rect x="2.4" y="4" width="6" height="4.6" fill="#afb1b3"/><path d="M3.6 4V2.4A1.7 1.7 0 0 0 0.4 2.4V3.6" fill="none" stroke="#afb1b3" stroke-width="0.9"/></svg>
<svg class="a" style="left:974.0px;top:624.6999999999999px;" width="9.2" height="9.2" viewBox="0 0 9.2 9.2"><circle cx="4.6" cy="4.6" r="4.5" fill="#bcbec0"/><circle cx="3.1" cy="3.7" r="0.7" fill="#3d3f41"/><circle cx="6.1" cy="3.7" r="0.7" fill="#3d3f41"/><path d="M2.6 6.2Q4.6 7.4 6.6 6.2" fill="none" stroke="#3d3f41" stroke-width="0.8"/></svg>
<svg class="a" style="left:989.8px;top:624.6999999999999px;" width="9.2" height="9.2" viewBox="0 0 9.2 9.2"><circle cx="4.6" cy="4.6" r="4.5" fill="#bcbec0"/><circle cx="3.1" cy="3.7" r="0.7" fill="#3d3f41"/><circle cx="6.1" cy="3.7" r="0.7" fill="#3d3f41"/><path d="M2.6 6.8Q4.6 5.6 6.6 6.8" fill="none" stroke="#3d3f41" stroke-width="0.8"/></svg>
<svg class="a" style="left:1006px;top:624.6px;" width="9" height="9.4" viewBox="0 0 9 9.4"><path d="M2.4 0.4h4.2l0.6 2.4H1.8z" fill="#afb1b3"/><path d="M0.4 3.2h8.2" stroke="#afb1b3" stroke-width="0.9"/><circle cx="3" cy="5.2" r="1.3" fill="none" stroke="#afb1b3" stroke-width="0.7"/><circle cx="6" cy="5.2" r="1.3" fill="none" stroke="#afb1b3" stroke-width="0.7"/><path d="M1.4 9.2c0-2.6 6.2-2.6 6.2 0z" fill="#afb1b3"/></svg>
<div class="a" style="left:881.2px;top:427px;width:135.0px;height:28.9px;background:#3d3f41;box-shadow:0 1.5px 5px rgba(0,0,0,.5),0 0 0 0.5px #2f3133;"></div>
<div class="a" style="left:881.2px;top:427px;width:135.0px;height:14.6px;background:#2f65ca;"></div>
<span class="t" style="left:887px;top:428.6px;color:#ffffff;font-size:9.6px;letter-spacing:0.184px;">0dp (match constraint)</span>
<span class="t" style="left:887px;top:443px;color:#c8c8c8;font-size:9.6px;letter-spacing:0.099px;">wrap_content</span>
<div class="a" style="left:1.2px;top:1.2px;width:1021.0px;height:634.4px;border:1px solid rgba(255,255,255,0.11);border-radius:6px;pointer-events:none;"></div>
</div></body></html>
